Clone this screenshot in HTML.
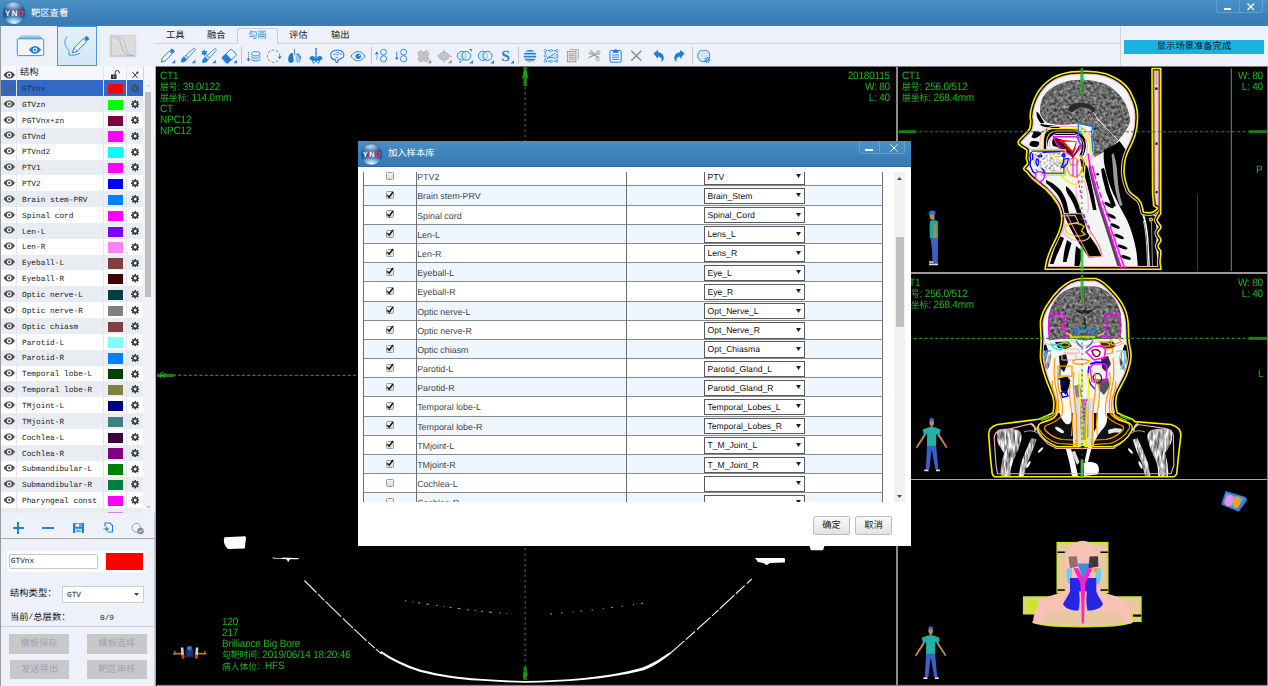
<!DOCTYPE html>
<html lang="zh"><head><meta charset="utf-8"><title>靶区查看</title>
<style>
*{box-sizing:border-box;margin:0;padding:0}
html,body{width:1268px;height:686px;overflow:hidden;background:#000;font-family:"Liberation Sans",sans-serif;text-rendering:geometricPrecision;}
body{position:relative}
.abs{position:absolute}
span.cj{display:inline-block;vertical-align:top;overflow:visible;font-family:"Liberation Sans","Noto Sans CJK SC",sans-serif;font-size:9.3px;line-height:9.3px;height:9.3px;white-space:nowrap;letter-spacing:0;font-weight:normal;text-align:left}
#title{position:absolute;left:0;top:0;width:1268px;height:26px;background:linear-gradient(#4a92c6,#3d80ba 60%,#3a7ab5)}
#band{position:absolute;left:0;top:26px;width:1268px;height:40px;background:#eef1f9}
#bandline{position:absolute;left:155px;top:66px;width:1113px;height:1px;background:#7a7a7a}
.logo{position:absolute;border-radius:50%;background:radial-gradient(ellipse 60% 35% at 50% 92%,#e8f6ff 0,rgba(140,200,235,.9) 45%,rgba(80,150,210,0) 100%),radial-gradient(ellipse 55% 30% at 45% 12%,rgba(255,255,255,.75) 0,rgba(255,255,255,0) 100%),radial-gradient(circle at 50% 45%,#2f6eb0 0,#1f5496 70%,#163f78 100%);box-shadow:0 0 1px #1a3f70}
.wbtn{position:absolute;top:0;height:13px;border:1px solid #62a0d2;border-top:0;background:linear-gradient(#4a92c6,#4087c0)}
#left{position:absolute;left:0;top:26px;width:155px;height:660px;background:#eef1f9}
.mono{font-family:"Liberation Mono",monospace}
.row{position:absolute;left:1px;width:142px;}
.gt{color:#20b420;font-size:10.6px;line-height:11.1px;height:11.1px;white-space:pre;position:absolute;letter-spacing:-0.2px;transform:scaleX(0.945);transform-origin:0 0}.gt.r{transform-origin:100% 0}
.view{position:absolute;background:#000;overflow:hidden}

</style></head>
<body>
<div id="title"></div>
<div class="logo" style="left:3.0px;top:2.0px;width:22.0px;height:22.0px"></div><div class="abs" style="left:3.0px;top:9.9px;width:22.0px;text-align:center;font:bold 7.9px 'Liberation Sans',sans-serif;color:#fff;letter-spacing:-0.2px;line-height:1">Y<span style="color:#e33">i</span>N<span style="color:#e33">O</span></div>
<div class="abs" style="left:31px;top:8.5px"><span class="cj" style="width:37.20px;color:#fff;">靶区查看</span></div>
<div class="wbtn" style="left:1216px;width:24px;border-radius:0 0 0 3px"></div><div class="wbtn" style="left:1239px;width:24px;border-radius:0 0 3px 0"></div>
<div class="abs" style="left:1224px;top:8px;width:7px;height:1.5px;background:#fff"></div>
<svg class="abs" style="left:1246px;top:2px" width="10" height="9" viewBox="0 0 10 9"><path d="M1.5 1.5L8 8M8 1.5L1.5 8" stroke="#fff" stroke-width="1.2" fill="none"/></svg>
<div id="band"></div><div id="bandline"></div>
<div class="abs" style="left:155px;top:43px;width:965px;height:1px;background:#d0d3dc"></div>
<div class="abs" style="left:237px;top:28px;width:41px;height:16px;border:1px solid #c8ccd6;border-bottom:0;border-radius:3px 3px 0 0;background:#eef1f9"></div>
<div class="abs" style="left:166.0px;top:30.5px"><span class="cj" style="width:18.60px;color:#222;">工具</span></div>
<div class="abs" style="left:207.0px;top:30.5px"><span class="cj" style="width:18.60px;color:#222;">融合</span></div>
<div class="abs" style="left:248.0px;top:30.5px"><span class="cj" style="width:18.60px;color:#2f8fdc;">勾画</span></div>
<div class="abs" style="left:289.0px;top:30.5px"><span class="cj" style="width:18.60px;color:#222;">评估</span></div>
<div class="abs" style="left:331.0px;top:30.5px"><span class="cj" style="width:18.60px;color:#222;">输出</span></div>
<div class="abs" style="left:1120px;top:26px;width:1px;height:40px;background:#cfd2da"></div>
<div class="abs" style="left:1124px;top:40px;width:140px;height:14px;background:#1ab3df;text-align:center;padding-top:2px"><span class="cj" style="width:74.40px;color:#111;">显示场景准备完成</span></div>
<div class="abs" style="left:240.5px;top:47px;width:1px;height:17px;background:#c2c6d0"></div>
<div class="abs" style="left:370.5px;top:47px;width:1px;height:17px;background:#c2c6d0"></div>
<div class="abs" style="left:518.0px;top:47px;width:1px;height:17px;background:#c2c6d0"></div>
<div class="abs" style="left:691.5px;top:47px;width:1px;height:17px;background:#c2c6d0"></div><div id="left"></div>
<div class="abs" style="left:0;top:26px;width:1px;height:660px;background:#9a9a9a"></div>
<div class="abs" style="left:154px;top:66px;width:1.800px;height:620px;background:linear-gradient(90deg,#dcdee4,#9a9a9a)"></div>
<div class="abs" style="left:57px;top:26px;width:39.5px;height:39.5px;border:1px solid #4a98d4;background:linear-gradient(#e6f0f8,#cfe8f4)"></div>
<div class="abs" style="left:1px;top:66px;width:153.5px;height:14.3px;background:#f6f7fb"></div>
<div class="abs" style="left:20px;top:68px"><span class="cj" style="width:18.60px;color:#222;">结构</span></div>
<svg class="abs" style="left:2.8px;top:70.5px" width="12.500" height="8" viewBox="0 0 22 14"><path d="M1 7C5 1.5 8.5 1 11 1s6 .5 10 6c-4 5.500-7.500 6-10 6S5 12.500 1 7z" fill="#444"/><circle cx="11" cy="7" r="4.300" fill="#f6f7fb"/><circle cx="11" cy="7" r="2" fill="#444"/></svg>
<div class="abs" style="left:1px;top:80.3px;width:153.500px;height:432.3px;background:#f0f2f8;overflow:hidden">
<div class="abs" style="left:0;top:0.00px;width:142px;height:15.95px;background:#316ac5"></div>
<svg class="abs" style="left:1.8px;top:3.6px" width="12.500" height="8" viewBox="0 0 22 14"><path d="M1 7C5 1.5 8.5 1 11 1s6 .5 10 6c-4 5.500-7.500 6-10 6S5 12.500 1 7z" fill="#4a5f8a"/><circle cx="11" cy="7" r="4.300" fill="#316ac5"/><circle cx="11" cy="7" r="2" fill="#4a5f8a"/></svg>
<div class="abs mono" style="left:21px;top:2.70px;font-size:7.8px;line-height:15.85px;color:#1c2c50;white-space:pre">GTVnx</div>
<div class="abs" style="left:107.200px;top:3.60px;width:15px;height:10.3px;background:#ff0000"></div>
<svg class="abs" style="left:129.7px;top:4.0px" width="8.400" height="8.400" viewBox="0 0 18 18"><g fill="#454b5c"><path d="M9 2.600a6.400 6.400 0 1 0 0 12.800a6.400 6.400 0 1 0 0-12.800zm0 3.400a3 3 0 1 1 0 6a3 3 0 1 1 0-6z" fill-rule="evenodd"/><rect x="7.300" y="0" width="3.400" height="4" transform="rotate(0 9 9)"/><rect x="7.300" y="0" width="3.400" height="4" transform="rotate(45 9 9)"/><rect x="7.300" y="0" width="3.400" height="4" transform="rotate(90 9 9)"/><rect x="7.300" y="0" width="3.400" height="4" transform="rotate(135 9 9)"/><rect x="7.300" y="0" width="3.400" height="4" transform="rotate(180 9 9)"/><rect x="7.300" y="0" width="3.400" height="4" transform="rotate(225 9 9)"/><rect x="7.300" y="0" width="3.400" height="4" transform="rotate(270 9 9)"/><rect x="7.300" y="0" width="3.400" height="4" transform="rotate(315 9 9)"/></g></svg>
<div class="abs" style="left:0;top:15.85px;width:142px;height:15.95px;background:#e9ecf3"></div>
<svg class="abs" style="left:1.8px;top:19.4px" width="12.500" height="8" viewBox="0 0 22 14"><path d="M1 7C5 1.5 8.5 1 11 1s6 .5 10 6c-4 5.500-7.500 6-10 6S5 12.500 1 7z" fill="#505050"/><circle cx="11" cy="7" r="4.300" fill="#e9ecf3"/><circle cx="11" cy="7" r="2" fill="#505050"/></svg>
<div class="abs mono" style="left:21px;top:18.55px;font-size:7.8px;line-height:15.85px;color:#222;white-space:pre">GTVzn</div>
<div class="abs" style="left:107.200px;top:19.45px;width:15px;height:10.3px;background:#00ff00"></div>
<svg class="abs" style="left:129.7px;top:19.9px" width="8.400" height="8.400" viewBox="0 0 18 18"><g fill="#3c3c3c"><path d="M9 2.600a6.400 6.400 0 1 0 0 12.800a6.400 6.400 0 1 0 0-12.800zm0 3.400a3 3 0 1 1 0 6a3 3 0 1 1 0-6z" fill-rule="evenodd"/><rect x="7.300" y="0" width="3.400" height="4" transform="rotate(0 9 9)"/><rect x="7.300" y="0" width="3.400" height="4" transform="rotate(45 9 9)"/><rect x="7.300" y="0" width="3.400" height="4" transform="rotate(90 9 9)"/><rect x="7.300" y="0" width="3.400" height="4" transform="rotate(135 9 9)"/><rect x="7.300" y="0" width="3.400" height="4" transform="rotate(180 9 9)"/><rect x="7.300" y="0" width="3.400" height="4" transform="rotate(225 9 9)"/><rect x="7.300" y="0" width="3.400" height="4" transform="rotate(270 9 9)"/><rect x="7.300" y="0" width="3.400" height="4" transform="rotate(315 9 9)"/></g></svg>
<div class="abs" style="left:0;top:31.70px;width:142px;height:15.95px;background:#ffffff"></div>
<svg class="abs" style="left:1.8px;top:35.3px" width="12.500" height="8" viewBox="0 0 22 14"><path d="M1 7C5 1.5 8.5 1 11 1s6 .5 10 6c-4 5.500-7.500 6-10 6S5 12.500 1 7z" fill="#505050"/><circle cx="11" cy="7" r="4.300" fill="#ffffff"/><circle cx="11" cy="7" r="2" fill="#505050"/></svg>
<div class="abs mono" style="left:21px;top:34.40px;font-size:7.8px;line-height:15.85px;color:#222;white-space:pre">PGTVnx+zn</div>
<div class="abs" style="left:107.200px;top:35.30px;width:15px;height:10.3px;background:#800040"></div>
<svg class="abs" style="left:129.7px;top:35.7px" width="8.400" height="8.400" viewBox="0 0 18 18"><g fill="#3c3c3c"><path d="M9 2.600a6.400 6.400 0 1 0 0 12.800a6.400 6.400 0 1 0 0-12.800zm0 3.400a3 3 0 1 1 0 6a3 3 0 1 1 0-6z" fill-rule="evenodd"/><rect x="7.300" y="0" width="3.400" height="4" transform="rotate(0 9 9)"/><rect x="7.300" y="0" width="3.400" height="4" transform="rotate(45 9 9)"/><rect x="7.300" y="0" width="3.400" height="4" transform="rotate(90 9 9)"/><rect x="7.300" y="0" width="3.400" height="4" transform="rotate(135 9 9)"/><rect x="7.300" y="0" width="3.400" height="4" transform="rotate(180 9 9)"/><rect x="7.300" y="0" width="3.400" height="4" transform="rotate(225 9 9)"/><rect x="7.300" y="0" width="3.400" height="4" transform="rotate(270 9 9)"/><rect x="7.300" y="0" width="3.400" height="4" transform="rotate(315 9 9)"/></g></svg>
<div class="abs" style="left:0;top:47.55px;width:142px;height:15.95px;background:#e9ecf3"></div>
<svg class="abs" style="left:1.8px;top:51.1px" width="12.500" height="8" viewBox="0 0 22 14"><path d="M1 7C5 1.5 8.5 1 11 1s6 .5 10 6c-4 5.500-7.500 6-10 6S5 12.500 1 7z" fill="#505050"/><circle cx="11" cy="7" r="4.300" fill="#e9ecf3"/><circle cx="11" cy="7" r="2" fill="#505050"/></svg>
<div class="abs mono" style="left:21px;top:50.25px;font-size:7.8px;line-height:15.85px;color:#222;white-space:pre">GTVnd</div>
<div class="abs" style="left:107.200px;top:51.15px;width:15px;height:10.3px;background:#ff00ff"></div>
<svg class="abs" style="left:129.7px;top:51.5px" width="8.400" height="8.400" viewBox="0 0 18 18"><g fill="#3c3c3c"><path d="M9 2.600a6.400 6.400 0 1 0 0 12.800a6.400 6.400 0 1 0 0-12.800zm0 3.400a3 3 0 1 1 0 6a3 3 0 1 1 0-6z" fill-rule="evenodd"/><rect x="7.300" y="0" width="3.400" height="4" transform="rotate(0 9 9)"/><rect x="7.300" y="0" width="3.400" height="4" transform="rotate(45 9 9)"/><rect x="7.300" y="0" width="3.400" height="4" transform="rotate(90 9 9)"/><rect x="7.300" y="0" width="3.400" height="4" transform="rotate(135 9 9)"/><rect x="7.300" y="0" width="3.400" height="4" transform="rotate(180 9 9)"/><rect x="7.300" y="0" width="3.400" height="4" transform="rotate(225 9 9)"/><rect x="7.300" y="0" width="3.400" height="4" transform="rotate(270 9 9)"/><rect x="7.300" y="0" width="3.400" height="4" transform="rotate(315 9 9)"/></g></svg>
<div class="abs" style="left:0;top:63.40px;width:142px;height:15.95px;background:#ffffff"></div>
<svg class="abs" style="left:1.8px;top:67.0px" width="12.500" height="8" viewBox="0 0 22 14"><path d="M1 7C5 1.5 8.5 1 11 1s6 .5 10 6c-4 5.500-7.500 6-10 6S5 12.500 1 7z" fill="#505050"/><circle cx="11" cy="7" r="4.300" fill="#ffffff"/><circle cx="11" cy="7" r="2" fill="#505050"/></svg>
<div class="abs mono" style="left:21px;top:66.10px;font-size:7.8px;line-height:15.85px;color:#222;white-space:pre">PTVnd2</div>
<div class="abs" style="left:107.200px;top:67.00px;width:15px;height:10.3px;background:#00ffff"></div>
<svg class="abs" style="left:129.7px;top:67.4px" width="8.400" height="8.400" viewBox="0 0 18 18"><g fill="#3c3c3c"><path d="M9 2.600a6.400 6.400 0 1 0 0 12.800a6.400 6.400 0 1 0 0-12.800zm0 3.400a3 3 0 1 1 0 6a3 3 0 1 1 0-6z" fill-rule="evenodd"/><rect x="7.300" y="0" width="3.400" height="4" transform="rotate(0 9 9)"/><rect x="7.300" y="0" width="3.400" height="4" transform="rotate(45 9 9)"/><rect x="7.300" y="0" width="3.400" height="4" transform="rotate(90 9 9)"/><rect x="7.300" y="0" width="3.400" height="4" transform="rotate(135 9 9)"/><rect x="7.300" y="0" width="3.400" height="4" transform="rotate(180 9 9)"/><rect x="7.300" y="0" width="3.400" height="4" transform="rotate(225 9 9)"/><rect x="7.300" y="0" width="3.400" height="4" transform="rotate(270 9 9)"/><rect x="7.300" y="0" width="3.400" height="4" transform="rotate(315 9 9)"/></g></svg>
<div class="abs" style="left:0;top:79.25px;width:142px;height:15.95px;background:#e9ecf3"></div>
<svg class="abs" style="left:1.8px;top:82.8px" width="12.500" height="8" viewBox="0 0 22 14"><path d="M1 7C5 1.5 8.5 1 11 1s6 .5 10 6c-4 5.500-7.500 6-10 6S5 12.500 1 7z" fill="#505050"/><circle cx="11" cy="7" r="4.300" fill="#e9ecf3"/><circle cx="11" cy="7" r="2" fill="#505050"/></svg>
<div class="abs mono" style="left:21px;top:81.95px;font-size:7.8px;line-height:15.85px;color:#222;white-space:pre">PTV1</div>
<div class="abs" style="left:107.200px;top:82.85px;width:15px;height:10.3px;background:#ff00ff"></div>
<svg class="abs" style="left:129.7px;top:83.2px" width="8.400" height="8.400" viewBox="0 0 18 18"><g fill="#3c3c3c"><path d="M9 2.600a6.400 6.400 0 1 0 0 12.800a6.400 6.400 0 1 0 0-12.800zm0 3.400a3 3 0 1 1 0 6a3 3 0 1 1 0-6z" fill-rule="evenodd"/><rect x="7.300" y="0" width="3.400" height="4" transform="rotate(0 9 9)"/><rect x="7.300" y="0" width="3.400" height="4" transform="rotate(45 9 9)"/><rect x="7.300" y="0" width="3.400" height="4" transform="rotate(90 9 9)"/><rect x="7.300" y="0" width="3.400" height="4" transform="rotate(135 9 9)"/><rect x="7.300" y="0" width="3.400" height="4" transform="rotate(180 9 9)"/><rect x="7.300" y="0" width="3.400" height="4" transform="rotate(225 9 9)"/><rect x="7.300" y="0" width="3.400" height="4" transform="rotate(270 9 9)"/><rect x="7.300" y="0" width="3.400" height="4" transform="rotate(315 9 9)"/></g></svg>
<div class="abs" style="left:0;top:95.10px;width:142px;height:15.95px;background:#ffffff"></div>
<svg class="abs" style="left:1.8px;top:98.7px" width="12.500" height="8" viewBox="0 0 22 14"><path d="M1 7C5 1.5 8.5 1 11 1s6 .5 10 6c-4 5.500-7.500 6-10 6S5 12.500 1 7z" fill="#505050"/><circle cx="11" cy="7" r="4.300" fill="#ffffff"/><circle cx="11" cy="7" r="2" fill="#505050"/></svg>
<div class="abs mono" style="left:21px;top:97.80px;font-size:7.8px;line-height:15.85px;color:#222;white-space:pre">PTV2</div>
<div class="abs" style="left:107.200px;top:98.70px;width:15px;height:10.3px;background:#0000ff"></div>
<svg class="abs" style="left:129.7px;top:99.1px" width="8.400" height="8.400" viewBox="0 0 18 18"><g fill="#3c3c3c"><path d="M9 2.600a6.400 6.400 0 1 0 0 12.800a6.400 6.400 0 1 0 0-12.800zm0 3.400a3 3 0 1 1 0 6a3 3 0 1 1 0-6z" fill-rule="evenodd"/><rect x="7.300" y="0" width="3.400" height="4" transform="rotate(0 9 9)"/><rect x="7.300" y="0" width="3.400" height="4" transform="rotate(45 9 9)"/><rect x="7.300" y="0" width="3.400" height="4" transform="rotate(90 9 9)"/><rect x="7.300" y="0" width="3.400" height="4" transform="rotate(135 9 9)"/><rect x="7.300" y="0" width="3.400" height="4" transform="rotate(180 9 9)"/><rect x="7.300" y="0" width="3.400" height="4" transform="rotate(225 9 9)"/><rect x="7.300" y="0" width="3.400" height="4" transform="rotate(270 9 9)"/><rect x="7.300" y="0" width="3.400" height="4" transform="rotate(315 9 9)"/></g></svg>
<div class="abs" style="left:0;top:110.95px;width:142px;height:15.95px;background:#e9ecf3"></div>
<svg class="abs" style="left:1.8px;top:114.5px" width="12.500" height="8" viewBox="0 0 22 14"><path d="M1 7C5 1.5 8.5 1 11 1s6 .5 10 6c-4 5.500-7.500 6-10 6S5 12.500 1 7z" fill="#505050"/><circle cx="11" cy="7" r="4.300" fill="#e9ecf3"/><circle cx="11" cy="7" r="2" fill="#505050"/></svg>
<div class="abs mono" style="left:21px;top:113.65px;font-size:7.8px;line-height:15.85px;color:#222;white-space:pre">Brain stem-PRV</div>
<div class="abs" style="left:107.200px;top:114.55px;width:15px;height:10.3px;background:#0080ff"></div>
<svg class="abs" style="left:129.7px;top:115.0px" width="8.400" height="8.400" viewBox="0 0 18 18"><g fill="#3c3c3c"><path d="M9 2.600a6.400 6.400 0 1 0 0 12.800a6.400 6.400 0 1 0 0-12.800zm0 3.400a3 3 0 1 1 0 6a3 3 0 1 1 0-6z" fill-rule="evenodd"/><rect x="7.300" y="0" width="3.400" height="4" transform="rotate(0 9 9)"/><rect x="7.300" y="0" width="3.400" height="4" transform="rotate(45 9 9)"/><rect x="7.300" y="0" width="3.400" height="4" transform="rotate(90 9 9)"/><rect x="7.300" y="0" width="3.400" height="4" transform="rotate(135 9 9)"/><rect x="7.300" y="0" width="3.400" height="4" transform="rotate(180 9 9)"/><rect x="7.300" y="0" width="3.400" height="4" transform="rotate(225 9 9)"/><rect x="7.300" y="0" width="3.400" height="4" transform="rotate(270 9 9)"/><rect x="7.300" y="0" width="3.400" height="4" transform="rotate(315 9 9)"/></g></svg>
<div class="abs" style="left:0;top:126.80px;width:142px;height:15.95px;background:#ffffff"></div>
<svg class="abs" style="left:1.8px;top:130.4px" width="12.500" height="8" viewBox="0 0 22 14"><path d="M1 7C5 1.5 8.5 1 11 1s6 .5 10 6c-4 5.500-7.500 6-10 6S5 12.500 1 7z" fill="#505050"/><circle cx="11" cy="7" r="4.300" fill="#ffffff"/><circle cx="11" cy="7" r="2" fill="#505050"/></svg>
<div class="abs mono" style="left:21px;top:129.50px;font-size:7.8px;line-height:15.85px;color:#222;white-space:pre">Spinal cord</div>
<div class="abs" style="left:107.200px;top:130.40px;width:15px;height:10.3px;background:#ff00ff"></div>
<svg class="abs" style="left:129.7px;top:130.8px" width="8.400" height="8.400" viewBox="0 0 18 18"><g fill="#3c3c3c"><path d="M9 2.600a6.400 6.400 0 1 0 0 12.800a6.400 6.400 0 1 0 0-12.800zm0 3.400a3 3 0 1 1 0 6a3 3 0 1 1 0-6z" fill-rule="evenodd"/><rect x="7.300" y="0" width="3.400" height="4" transform="rotate(0 9 9)"/><rect x="7.300" y="0" width="3.400" height="4" transform="rotate(45 9 9)"/><rect x="7.300" y="0" width="3.400" height="4" transform="rotate(90 9 9)"/><rect x="7.300" y="0" width="3.400" height="4" transform="rotate(135 9 9)"/><rect x="7.300" y="0" width="3.400" height="4" transform="rotate(180 9 9)"/><rect x="7.300" y="0" width="3.400" height="4" transform="rotate(225 9 9)"/><rect x="7.300" y="0" width="3.400" height="4" transform="rotate(270 9 9)"/><rect x="7.300" y="0" width="3.400" height="4" transform="rotate(315 9 9)"/></g></svg>
<div class="abs" style="left:0;top:142.65px;width:142px;height:15.95px;background:#e9ecf3"></div>
<svg class="abs" style="left:1.8px;top:146.2px" width="12.500" height="8" viewBox="0 0 22 14"><path d="M1 7C5 1.5 8.5 1 11 1s6 .5 10 6c-4 5.500-7.500 6-10 6S5 12.500 1 7z" fill="#505050"/><circle cx="11" cy="7" r="4.300" fill="#e9ecf3"/><circle cx="11" cy="7" r="2" fill="#505050"/></svg>
<div class="abs mono" style="left:21px;top:145.35px;font-size:7.8px;line-height:15.85px;color:#222;white-space:pre">Len-L</div>
<div class="abs" style="left:107.200px;top:146.25px;width:15px;height:10.3px;background:#8000ff"></div>
<svg class="abs" style="left:129.7px;top:146.7px" width="8.400" height="8.400" viewBox="0 0 18 18"><g fill="#3c3c3c"><path d="M9 2.600a6.400 6.400 0 1 0 0 12.800a6.400 6.400 0 1 0 0-12.800zm0 3.400a3 3 0 1 1 0 6a3 3 0 1 1 0-6z" fill-rule="evenodd"/><rect x="7.300" y="0" width="3.400" height="4" transform="rotate(0 9 9)"/><rect x="7.300" y="0" width="3.400" height="4" transform="rotate(45 9 9)"/><rect x="7.300" y="0" width="3.400" height="4" transform="rotate(90 9 9)"/><rect x="7.300" y="0" width="3.400" height="4" transform="rotate(135 9 9)"/><rect x="7.300" y="0" width="3.400" height="4" transform="rotate(180 9 9)"/><rect x="7.300" y="0" width="3.400" height="4" transform="rotate(225 9 9)"/><rect x="7.300" y="0" width="3.400" height="4" transform="rotate(270 9 9)"/><rect x="7.300" y="0" width="3.400" height="4" transform="rotate(315 9 9)"/></g></svg>
<div class="abs" style="left:0;top:158.50px;width:142px;height:15.95px;background:#ffffff"></div>
<svg class="abs" style="left:1.8px;top:162.1px" width="12.500" height="8" viewBox="0 0 22 14"><path d="M1 7C5 1.5 8.5 1 11 1s6 .5 10 6c-4 5.500-7.500 6-10 6S5 12.500 1 7z" fill="#505050"/><circle cx="11" cy="7" r="4.300" fill="#ffffff"/><circle cx="11" cy="7" r="2" fill="#505050"/></svg>
<div class="abs mono" style="left:21px;top:161.20px;font-size:7.8px;line-height:15.85px;color:#222;white-space:pre">Len-R</div>
<div class="abs" style="left:107.200px;top:162.10px;width:15px;height:10.3px;background:#ff80ff"></div>
<svg class="abs" style="left:129.7px;top:162.5px" width="8.400" height="8.400" viewBox="0 0 18 18"><g fill="#3c3c3c"><path d="M9 2.600a6.400 6.400 0 1 0 0 12.800a6.400 6.400 0 1 0 0-12.800zm0 3.400a3 3 0 1 1 0 6a3 3 0 1 1 0-6z" fill-rule="evenodd"/><rect x="7.300" y="0" width="3.400" height="4" transform="rotate(0 9 9)"/><rect x="7.300" y="0" width="3.400" height="4" transform="rotate(45 9 9)"/><rect x="7.300" y="0" width="3.400" height="4" transform="rotate(90 9 9)"/><rect x="7.300" y="0" width="3.400" height="4" transform="rotate(135 9 9)"/><rect x="7.300" y="0" width="3.400" height="4" transform="rotate(180 9 9)"/><rect x="7.300" y="0" width="3.400" height="4" transform="rotate(225 9 9)"/><rect x="7.300" y="0" width="3.400" height="4" transform="rotate(270 9 9)"/><rect x="7.300" y="0" width="3.400" height="4" transform="rotate(315 9 9)"/></g></svg>
<div class="abs" style="left:0;top:174.35px;width:142px;height:15.95px;background:#e9ecf3"></div>
<svg class="abs" style="left:1.8px;top:177.9px" width="12.500" height="8" viewBox="0 0 22 14"><path d="M1 7C5 1.5 8.5 1 11 1s6 .5 10 6c-4 5.500-7.500 6-10 6S5 12.500 1 7z" fill="#505050"/><circle cx="11" cy="7" r="4.300" fill="#e9ecf3"/><circle cx="11" cy="7" r="2" fill="#505050"/></svg>
<div class="abs mono" style="left:21px;top:177.05px;font-size:7.8px;line-height:15.85px;color:#222;white-space:pre">Eyeball-L</div>
<div class="abs" style="left:107.200px;top:177.95px;width:15px;height:10.3px;background:#804040"></div>
<svg class="abs" style="left:129.7px;top:178.3px" width="8.400" height="8.400" viewBox="0 0 18 18"><g fill="#3c3c3c"><path d="M9 2.600a6.400 6.400 0 1 0 0 12.800a6.400 6.400 0 1 0 0-12.800zm0 3.400a3 3 0 1 1 0 6a3 3 0 1 1 0-6z" fill-rule="evenodd"/><rect x="7.300" y="0" width="3.400" height="4" transform="rotate(0 9 9)"/><rect x="7.300" y="0" width="3.400" height="4" transform="rotate(45 9 9)"/><rect x="7.300" y="0" width="3.400" height="4" transform="rotate(90 9 9)"/><rect x="7.300" y="0" width="3.400" height="4" transform="rotate(135 9 9)"/><rect x="7.300" y="0" width="3.400" height="4" transform="rotate(180 9 9)"/><rect x="7.300" y="0" width="3.400" height="4" transform="rotate(225 9 9)"/><rect x="7.300" y="0" width="3.400" height="4" transform="rotate(270 9 9)"/><rect x="7.300" y="0" width="3.400" height="4" transform="rotate(315 9 9)"/></g></svg>
<div class="abs" style="left:0;top:190.20px;width:142px;height:15.95px;background:#ffffff"></div>
<svg class="abs" style="left:1.8px;top:193.8px" width="12.500" height="8" viewBox="0 0 22 14"><path d="M1 7C5 1.5 8.5 1 11 1s6 .5 10 6c-4 5.500-7.500 6-10 6S5 12.500 1 7z" fill="#505050"/><circle cx="11" cy="7" r="4.300" fill="#ffffff"/><circle cx="11" cy="7" r="2" fill="#505050"/></svg>
<div class="abs mono" style="left:21px;top:192.90px;font-size:7.8px;line-height:15.85px;color:#222;white-space:pre">Eyeball-R</div>
<div class="abs" style="left:107.200px;top:193.80px;width:15px;height:10.3px;background:#400000"></div>
<svg class="abs" style="left:129.7px;top:194.2px" width="8.400" height="8.400" viewBox="0 0 18 18"><g fill="#3c3c3c"><path d="M9 2.600a6.400 6.400 0 1 0 0 12.800a6.400 6.400 0 1 0 0-12.800zm0 3.400a3 3 0 1 1 0 6a3 3 0 1 1 0-6z" fill-rule="evenodd"/><rect x="7.300" y="0" width="3.400" height="4" transform="rotate(0 9 9)"/><rect x="7.300" y="0" width="3.400" height="4" transform="rotate(45 9 9)"/><rect x="7.300" y="0" width="3.400" height="4" transform="rotate(90 9 9)"/><rect x="7.300" y="0" width="3.400" height="4" transform="rotate(135 9 9)"/><rect x="7.300" y="0" width="3.400" height="4" transform="rotate(180 9 9)"/><rect x="7.300" y="0" width="3.400" height="4" transform="rotate(225 9 9)"/><rect x="7.300" y="0" width="3.400" height="4" transform="rotate(270 9 9)"/><rect x="7.300" y="0" width="3.400" height="4" transform="rotate(315 9 9)"/></g></svg>
<div class="abs" style="left:0;top:206.05px;width:142px;height:15.95px;background:#e9ecf3"></div>
<svg class="abs" style="left:1.8px;top:209.6px" width="12.500" height="8" viewBox="0 0 22 14"><path d="M1 7C5 1.5 8.5 1 11 1s6 .5 10 6c-4 5.500-7.500 6-10 6S5 12.500 1 7z" fill="#505050"/><circle cx="11" cy="7" r="4.300" fill="#e9ecf3"/><circle cx="11" cy="7" r="2" fill="#505050"/></svg>
<div class="abs mono" style="left:21px;top:208.75px;font-size:7.8px;line-height:15.85px;color:#222;white-space:pre">Optic nerve-L</div>
<div class="abs" style="left:107.200px;top:209.65px;width:15px;height:10.3px;background:#004040"></div>
<svg class="abs" style="left:129.7px;top:210.0px" width="8.400" height="8.400" viewBox="0 0 18 18"><g fill="#3c3c3c"><path d="M9 2.600a6.400 6.400 0 1 0 0 12.800a6.400 6.400 0 1 0 0-12.800zm0 3.400a3 3 0 1 1 0 6a3 3 0 1 1 0-6z" fill-rule="evenodd"/><rect x="7.300" y="0" width="3.400" height="4" transform="rotate(0 9 9)"/><rect x="7.300" y="0" width="3.400" height="4" transform="rotate(45 9 9)"/><rect x="7.300" y="0" width="3.400" height="4" transform="rotate(90 9 9)"/><rect x="7.300" y="0" width="3.400" height="4" transform="rotate(135 9 9)"/><rect x="7.300" y="0" width="3.400" height="4" transform="rotate(180 9 9)"/><rect x="7.300" y="0" width="3.400" height="4" transform="rotate(225 9 9)"/><rect x="7.300" y="0" width="3.400" height="4" transform="rotate(270 9 9)"/><rect x="7.300" y="0" width="3.400" height="4" transform="rotate(315 9 9)"/></g></svg>
<div class="abs" style="left:0;top:221.90px;width:142px;height:15.95px;background:#ffffff"></div>
<svg class="abs" style="left:1.8px;top:225.5px" width="12.500" height="8" viewBox="0 0 22 14"><path d="M1 7C5 1.5 8.5 1 11 1s6 .5 10 6c-4 5.500-7.500 6-10 6S5 12.500 1 7z" fill="#505050"/><circle cx="11" cy="7" r="4.300" fill="#ffffff"/><circle cx="11" cy="7" r="2" fill="#505050"/></svg>
<div class="abs mono" style="left:21px;top:224.60px;font-size:7.8px;line-height:15.85px;color:#222;white-space:pre">Optic nerve-R</div>
<div class="abs" style="left:107.200px;top:225.50px;width:15px;height:10.3px;background:#808080"></div>
<svg class="abs" style="left:129.7px;top:225.9px" width="8.400" height="8.400" viewBox="0 0 18 18"><g fill="#3c3c3c"><path d="M9 2.600a6.400 6.400 0 1 0 0 12.800a6.400 6.400 0 1 0 0-12.800zm0 3.400a3 3 0 1 1 0 6a3 3 0 1 1 0-6z" fill-rule="evenodd"/><rect x="7.300" y="0" width="3.400" height="4" transform="rotate(0 9 9)"/><rect x="7.300" y="0" width="3.400" height="4" transform="rotate(45 9 9)"/><rect x="7.300" y="0" width="3.400" height="4" transform="rotate(90 9 9)"/><rect x="7.300" y="0" width="3.400" height="4" transform="rotate(135 9 9)"/><rect x="7.300" y="0" width="3.400" height="4" transform="rotate(180 9 9)"/><rect x="7.300" y="0" width="3.400" height="4" transform="rotate(225 9 9)"/><rect x="7.300" y="0" width="3.400" height="4" transform="rotate(270 9 9)"/><rect x="7.300" y="0" width="3.400" height="4" transform="rotate(315 9 9)"/></g></svg>
<div class="abs" style="left:0;top:237.75px;width:142px;height:15.95px;background:#e9ecf3"></div>
<svg class="abs" style="left:1.8px;top:241.3px" width="12.500" height="8" viewBox="0 0 22 14"><path d="M1 7C5 1.5 8.5 1 11 1s6 .5 10 6c-4 5.500-7.500 6-10 6S5 12.500 1 7z" fill="#505050"/><circle cx="11" cy="7" r="4.300" fill="#e9ecf3"/><circle cx="11" cy="7" r="2" fill="#505050"/></svg>
<div class="abs mono" style="left:21px;top:240.45px;font-size:7.8px;line-height:15.85px;color:#222;white-space:pre">Optic chiasm</div>
<div class="abs" style="left:107.200px;top:241.35px;width:15px;height:10.3px;background:#804040"></div>
<svg class="abs" style="left:129.7px;top:241.8px" width="8.400" height="8.400" viewBox="0 0 18 18"><g fill="#3c3c3c"><path d="M9 2.600a6.400 6.400 0 1 0 0 12.800a6.400 6.400 0 1 0 0-12.800zm0 3.400a3 3 0 1 1 0 6a3 3 0 1 1 0-6z" fill-rule="evenodd"/><rect x="7.300" y="0" width="3.400" height="4" transform="rotate(0 9 9)"/><rect x="7.300" y="0" width="3.400" height="4" transform="rotate(45 9 9)"/><rect x="7.300" y="0" width="3.400" height="4" transform="rotate(90 9 9)"/><rect x="7.300" y="0" width="3.400" height="4" transform="rotate(135 9 9)"/><rect x="7.300" y="0" width="3.400" height="4" transform="rotate(180 9 9)"/><rect x="7.300" y="0" width="3.400" height="4" transform="rotate(225 9 9)"/><rect x="7.300" y="0" width="3.400" height="4" transform="rotate(270 9 9)"/><rect x="7.300" y="0" width="3.400" height="4" transform="rotate(315 9 9)"/></g></svg>
<div class="abs" style="left:0;top:253.60px;width:142px;height:15.95px;background:#ffffff"></div>
<svg class="abs" style="left:1.8px;top:257.2px" width="12.500" height="8" viewBox="0 0 22 14"><path d="M1 7C5 1.5 8.5 1 11 1s6 .5 10 6c-4 5.500-7.500 6-10 6S5 12.500 1 7z" fill="#505050"/><circle cx="11" cy="7" r="4.300" fill="#ffffff"/><circle cx="11" cy="7" r="2" fill="#505050"/></svg>
<div class="abs mono" style="left:21px;top:256.30px;font-size:7.8px;line-height:15.85px;color:#222;white-space:pre">Parotid-L</div>
<div class="abs" style="left:107.200px;top:257.20px;width:15px;height:10.3px;background:#80ffff"></div>
<svg class="abs" style="left:129.7px;top:257.6px" width="8.400" height="8.400" viewBox="0 0 18 18"><g fill="#3c3c3c"><path d="M9 2.600a6.400 6.400 0 1 0 0 12.800a6.400 6.400 0 1 0 0-12.800zm0 3.400a3 3 0 1 1 0 6a3 3 0 1 1 0-6z" fill-rule="evenodd"/><rect x="7.300" y="0" width="3.400" height="4" transform="rotate(0 9 9)"/><rect x="7.300" y="0" width="3.400" height="4" transform="rotate(45 9 9)"/><rect x="7.300" y="0" width="3.400" height="4" transform="rotate(90 9 9)"/><rect x="7.300" y="0" width="3.400" height="4" transform="rotate(135 9 9)"/><rect x="7.300" y="0" width="3.400" height="4" transform="rotate(180 9 9)"/><rect x="7.300" y="0" width="3.400" height="4" transform="rotate(225 9 9)"/><rect x="7.300" y="0" width="3.400" height="4" transform="rotate(270 9 9)"/><rect x="7.300" y="0" width="3.400" height="4" transform="rotate(315 9 9)"/></g></svg>
<div class="abs" style="left:0;top:269.45px;width:142px;height:15.95px;background:#e9ecf3"></div>
<svg class="abs" style="left:1.8px;top:273.1px" width="12.500" height="8" viewBox="0 0 22 14"><path d="M1 7C5 1.5 8.5 1 11 1s6 .5 10 6c-4 5.500-7.500 6-10 6S5 12.500 1 7z" fill="#505050"/><circle cx="11" cy="7" r="4.300" fill="#e9ecf3"/><circle cx="11" cy="7" r="2" fill="#505050"/></svg>
<div class="abs mono" style="left:21px;top:272.15px;font-size:7.8px;line-height:15.85px;color:#222;white-space:pre">Parotid-R</div>
<div class="abs" style="left:107.200px;top:273.05px;width:15px;height:10.3px;background:#0080ff"></div>
<svg class="abs" style="left:129.7px;top:273.4px" width="8.400" height="8.400" viewBox="0 0 18 18"><g fill="#3c3c3c"><path d="M9 2.600a6.400 6.400 0 1 0 0 12.800a6.400 6.400 0 1 0 0-12.800zm0 3.400a3 3 0 1 1 0 6a3 3 0 1 1 0-6z" fill-rule="evenodd"/><rect x="7.300" y="0" width="3.400" height="4" transform="rotate(0 9 9)"/><rect x="7.300" y="0" width="3.400" height="4" transform="rotate(45 9 9)"/><rect x="7.300" y="0" width="3.400" height="4" transform="rotate(90 9 9)"/><rect x="7.300" y="0" width="3.400" height="4" transform="rotate(135 9 9)"/><rect x="7.300" y="0" width="3.400" height="4" transform="rotate(180 9 9)"/><rect x="7.300" y="0" width="3.400" height="4" transform="rotate(225 9 9)"/><rect x="7.300" y="0" width="3.400" height="4" transform="rotate(270 9 9)"/><rect x="7.300" y="0" width="3.400" height="4" transform="rotate(315 9 9)"/></g></svg>
<div class="abs" style="left:0;top:285.30px;width:142px;height:15.95px;background:#ffffff"></div>
<svg class="abs" style="left:1.8px;top:288.9px" width="12.500" height="8" viewBox="0 0 22 14"><path d="M1 7C5 1.5 8.5 1 11 1s6 .5 10 6c-4 5.500-7.500 6-10 6S5 12.500 1 7z" fill="#505050"/><circle cx="11" cy="7" r="4.300" fill="#ffffff"/><circle cx="11" cy="7" r="2" fill="#505050"/></svg>
<div class="abs mono" style="left:21px;top:288.00px;font-size:7.8px;line-height:15.85px;color:#222;white-space:pre">Temporal lobe-L</div>
<div class="abs" style="left:107.200px;top:288.90px;width:15px;height:10.3px;background:#004000"></div>
<svg class="abs" style="left:129.7px;top:289.3px" width="8.400" height="8.400" viewBox="0 0 18 18"><g fill="#3c3c3c"><path d="M9 2.600a6.400 6.400 0 1 0 0 12.800a6.400 6.400 0 1 0 0-12.800zm0 3.400a3 3 0 1 1 0 6a3 3 0 1 1 0-6z" fill-rule="evenodd"/><rect x="7.300" y="0" width="3.400" height="4" transform="rotate(0 9 9)"/><rect x="7.300" y="0" width="3.400" height="4" transform="rotate(45 9 9)"/><rect x="7.300" y="0" width="3.400" height="4" transform="rotate(90 9 9)"/><rect x="7.300" y="0" width="3.400" height="4" transform="rotate(135 9 9)"/><rect x="7.300" y="0" width="3.400" height="4" transform="rotate(180 9 9)"/><rect x="7.300" y="0" width="3.400" height="4" transform="rotate(225 9 9)"/><rect x="7.300" y="0" width="3.400" height="4" transform="rotate(270 9 9)"/><rect x="7.300" y="0" width="3.400" height="4" transform="rotate(315 9 9)"/></g></svg>
<div class="abs" style="left:0;top:301.15px;width:142px;height:15.95px;background:#e9ecf3"></div>
<svg class="abs" style="left:1.8px;top:304.8px" width="12.500" height="8" viewBox="0 0 22 14"><path d="M1 7C5 1.5 8.5 1 11 1s6 .5 10 6c-4 5.500-7.500 6-10 6S5 12.500 1 7z" fill="#505050"/><circle cx="11" cy="7" r="4.300" fill="#e9ecf3"/><circle cx="11" cy="7" r="2" fill="#505050"/></svg>
<div class="abs mono" style="left:21px;top:303.85px;font-size:7.8px;line-height:15.85px;color:#222;white-space:pre">Temporal lobe-R</div>
<div class="abs" style="left:107.200px;top:304.75px;width:15px;height:10.3px;background:#808040"></div>
<svg class="abs" style="left:129.7px;top:305.1px" width="8.400" height="8.400" viewBox="0 0 18 18"><g fill="#3c3c3c"><path d="M9 2.600a6.400 6.400 0 1 0 0 12.800a6.400 6.400 0 1 0 0-12.800zm0 3.400a3 3 0 1 1 0 6a3 3 0 1 1 0-6z" fill-rule="evenodd"/><rect x="7.300" y="0" width="3.400" height="4" transform="rotate(0 9 9)"/><rect x="7.300" y="0" width="3.400" height="4" transform="rotate(45 9 9)"/><rect x="7.300" y="0" width="3.400" height="4" transform="rotate(90 9 9)"/><rect x="7.300" y="0" width="3.400" height="4" transform="rotate(135 9 9)"/><rect x="7.300" y="0" width="3.400" height="4" transform="rotate(180 9 9)"/><rect x="7.300" y="0" width="3.400" height="4" transform="rotate(225 9 9)"/><rect x="7.300" y="0" width="3.400" height="4" transform="rotate(270 9 9)"/><rect x="7.300" y="0" width="3.400" height="4" transform="rotate(315 9 9)"/></g></svg>
<div class="abs" style="left:0;top:317.00px;width:142px;height:15.95px;background:#ffffff"></div>
<svg class="abs" style="left:1.8px;top:320.6px" width="12.500" height="8" viewBox="0 0 22 14"><path d="M1 7C5 1.5 8.5 1 11 1s6 .5 10 6c-4 5.500-7.500 6-10 6S5 12.500 1 7z" fill="#505050"/><circle cx="11" cy="7" r="4.300" fill="#ffffff"/><circle cx="11" cy="7" r="2" fill="#505050"/></svg>
<div class="abs mono" style="left:21px;top:319.70px;font-size:7.8px;line-height:15.85px;color:#222;white-space:pre">TMjoint-L</div>
<div class="abs" style="left:107.200px;top:320.60px;width:15px;height:10.3px;background:#000080"></div>
<svg class="abs" style="left:129.7px;top:321.0px" width="8.400" height="8.400" viewBox="0 0 18 18"><g fill="#3c3c3c"><path d="M9 2.600a6.400 6.400 0 1 0 0 12.800a6.400 6.400 0 1 0 0-12.800zm0 3.400a3 3 0 1 1 0 6a3 3 0 1 1 0-6z" fill-rule="evenodd"/><rect x="7.300" y="0" width="3.400" height="4" transform="rotate(0 9 9)"/><rect x="7.300" y="0" width="3.400" height="4" transform="rotate(45 9 9)"/><rect x="7.300" y="0" width="3.400" height="4" transform="rotate(90 9 9)"/><rect x="7.300" y="0" width="3.400" height="4" transform="rotate(135 9 9)"/><rect x="7.300" y="0" width="3.400" height="4" transform="rotate(180 9 9)"/><rect x="7.300" y="0" width="3.400" height="4" transform="rotate(225 9 9)"/><rect x="7.300" y="0" width="3.400" height="4" transform="rotate(270 9 9)"/><rect x="7.300" y="0" width="3.400" height="4" transform="rotate(315 9 9)"/></g></svg>
<div class="abs" style="left:0;top:332.85px;width:142px;height:15.95px;background:#e9ecf3"></div>
<svg class="abs" style="left:1.8px;top:336.4px" width="12.500" height="8" viewBox="0 0 22 14"><path d="M1 7C5 1.5 8.5 1 11 1s6 .5 10 6c-4 5.500-7.500 6-10 6S5 12.500 1 7z" fill="#505050"/><circle cx="11" cy="7" r="4.300" fill="#e9ecf3"/><circle cx="11" cy="7" r="2" fill="#505050"/></svg>
<div class="abs mono" style="left:21px;top:335.55px;font-size:7.8px;line-height:15.85px;color:#222;white-space:pre">TMjoint-R</div>
<div class="abs" style="left:107.200px;top:336.45px;width:15px;height:10.3px;background:#408080"></div>
<svg class="abs" style="left:129.7px;top:336.8px" width="8.400" height="8.400" viewBox="0 0 18 18"><g fill="#3c3c3c"><path d="M9 2.600a6.400 6.400 0 1 0 0 12.800a6.400 6.400 0 1 0 0-12.800zm0 3.400a3 3 0 1 1 0 6a3 3 0 1 1 0-6z" fill-rule="evenodd"/><rect x="7.300" y="0" width="3.400" height="4" transform="rotate(0 9 9)"/><rect x="7.300" y="0" width="3.400" height="4" transform="rotate(45 9 9)"/><rect x="7.300" y="0" width="3.400" height="4" transform="rotate(90 9 9)"/><rect x="7.300" y="0" width="3.400" height="4" transform="rotate(135 9 9)"/><rect x="7.300" y="0" width="3.400" height="4" transform="rotate(180 9 9)"/><rect x="7.300" y="0" width="3.400" height="4" transform="rotate(225 9 9)"/><rect x="7.300" y="0" width="3.400" height="4" transform="rotate(270 9 9)"/><rect x="7.300" y="0" width="3.400" height="4" transform="rotate(315 9 9)"/></g></svg>
<div class="abs" style="left:0;top:348.70px;width:142px;height:15.95px;background:#ffffff"></div>
<svg class="abs" style="left:1.8px;top:352.3px" width="12.500" height="8" viewBox="0 0 22 14"><path d="M1 7C5 1.5 8.5 1 11 1s6 .5 10 6c-4 5.500-7.500 6-10 6S5 12.500 1 7z" fill="#505050"/><circle cx="11" cy="7" r="4.300" fill="#ffffff"/><circle cx="11" cy="7" r="2" fill="#505050"/></svg>
<div class="abs mono" style="left:21px;top:351.40px;font-size:7.8px;line-height:15.85px;color:#222;white-space:pre">Cochlea-L</div>
<div class="abs" style="left:107.200px;top:352.30px;width:15px;height:10.3px;background:#400040"></div>
<svg class="abs" style="left:129.7px;top:352.7px" width="8.400" height="8.400" viewBox="0 0 18 18"><g fill="#3c3c3c"><path d="M9 2.600a6.400 6.400 0 1 0 0 12.800a6.400 6.400 0 1 0 0-12.800zm0 3.400a3 3 0 1 1 0 6a3 3 0 1 1 0-6z" fill-rule="evenodd"/><rect x="7.300" y="0" width="3.400" height="4" transform="rotate(0 9 9)"/><rect x="7.300" y="0" width="3.400" height="4" transform="rotate(45 9 9)"/><rect x="7.300" y="0" width="3.400" height="4" transform="rotate(90 9 9)"/><rect x="7.300" y="0" width="3.400" height="4" transform="rotate(135 9 9)"/><rect x="7.300" y="0" width="3.400" height="4" transform="rotate(180 9 9)"/><rect x="7.300" y="0" width="3.400" height="4" transform="rotate(225 9 9)"/><rect x="7.300" y="0" width="3.400" height="4" transform="rotate(270 9 9)"/><rect x="7.300" y="0" width="3.400" height="4" transform="rotate(315 9 9)"/></g></svg>
<div class="abs" style="left:0;top:364.55px;width:142px;height:15.95px;background:#e9ecf3"></div>
<svg class="abs" style="left:1.8px;top:368.2px" width="12.500" height="8" viewBox="0 0 22 14"><path d="M1 7C5 1.5 8.5 1 11 1s6 .5 10 6c-4 5.500-7.500 6-10 6S5 12.500 1 7z" fill="#505050"/><circle cx="11" cy="7" r="4.300" fill="#e9ecf3"/><circle cx="11" cy="7" r="2" fill="#505050"/></svg>
<div class="abs mono" style="left:21px;top:367.25px;font-size:7.8px;line-height:15.85px;color:#222;white-space:pre">Cochlea-R</div>
<div class="abs" style="left:107.200px;top:368.15px;width:15px;height:10.3px;background:#800080"></div>
<svg class="abs" style="left:129.7px;top:368.6px" width="8.400" height="8.400" viewBox="0 0 18 18"><g fill="#3c3c3c"><path d="M9 2.600a6.400 6.400 0 1 0 0 12.800a6.400 6.400 0 1 0 0-12.800zm0 3.400a3 3 0 1 1 0 6a3 3 0 1 1 0-6z" fill-rule="evenodd"/><rect x="7.300" y="0" width="3.400" height="4" transform="rotate(0 9 9)"/><rect x="7.300" y="0" width="3.400" height="4" transform="rotate(45 9 9)"/><rect x="7.300" y="0" width="3.400" height="4" transform="rotate(90 9 9)"/><rect x="7.300" y="0" width="3.400" height="4" transform="rotate(135 9 9)"/><rect x="7.300" y="0" width="3.400" height="4" transform="rotate(180 9 9)"/><rect x="7.300" y="0" width="3.400" height="4" transform="rotate(225 9 9)"/><rect x="7.300" y="0" width="3.400" height="4" transform="rotate(270 9 9)"/><rect x="7.300" y="0" width="3.400" height="4" transform="rotate(315 9 9)"/></g></svg>
<div class="abs" style="left:0;top:380.40px;width:142px;height:15.95px;background:#ffffff"></div>
<svg class="abs" style="left:1.8px;top:384.0px" width="12.500" height="8" viewBox="0 0 22 14"><path d="M1 7C5 1.5 8.5 1 11 1s6 .5 10 6c-4 5.500-7.500 6-10 6S5 12.500 1 7z" fill="#505050"/><circle cx="11" cy="7" r="4.300" fill="#ffffff"/><circle cx="11" cy="7" r="2" fill="#505050"/></svg>
<div class="abs mono" style="left:21px;top:383.10px;font-size:7.8px;line-height:15.85px;color:#222;white-space:pre">Submandibular-L</div>
<div class="abs" style="left:107.200px;top:384.00px;width:15px;height:10.3px;background:#008000"></div>
<svg class="abs" style="left:129.7px;top:384.4px" width="8.400" height="8.400" viewBox="0 0 18 18"><g fill="#3c3c3c"><path d="M9 2.600a6.400 6.400 0 1 0 0 12.800a6.400 6.400 0 1 0 0-12.800zm0 3.400a3 3 0 1 1 0 6a3 3 0 1 1 0-6z" fill-rule="evenodd"/><rect x="7.300" y="0" width="3.400" height="4" transform="rotate(0 9 9)"/><rect x="7.300" y="0" width="3.400" height="4" transform="rotate(45 9 9)"/><rect x="7.300" y="0" width="3.400" height="4" transform="rotate(90 9 9)"/><rect x="7.300" y="0" width="3.400" height="4" transform="rotate(135 9 9)"/><rect x="7.300" y="0" width="3.400" height="4" transform="rotate(180 9 9)"/><rect x="7.300" y="0" width="3.400" height="4" transform="rotate(225 9 9)"/><rect x="7.300" y="0" width="3.400" height="4" transform="rotate(270 9 9)"/><rect x="7.300" y="0" width="3.400" height="4" transform="rotate(315 9 9)"/></g></svg>
<div class="abs" style="left:0;top:396.25px;width:142px;height:15.95px;background:#e9ecf3"></div>
<svg class="abs" style="left:1.8px;top:399.9px" width="12.500" height="8" viewBox="0 0 22 14"><path d="M1 7C5 1.5 8.5 1 11 1s6 .5 10 6c-4 5.500-7.500 6-10 6S5 12.500 1 7z" fill="#505050"/><circle cx="11" cy="7" r="4.300" fill="#e9ecf3"/><circle cx="11" cy="7" r="2" fill="#505050"/></svg>
<div class="abs mono" style="left:21px;top:398.95px;font-size:7.8px;line-height:15.85px;color:#222;white-space:pre">Submandibular-R</div>
<div class="abs" style="left:107.200px;top:399.85px;width:15px;height:10.3px;background:#008040"></div>
<svg class="abs" style="left:129.7px;top:400.2px" width="8.400" height="8.400" viewBox="0 0 18 18"><g fill="#3c3c3c"><path d="M9 2.600a6.400 6.400 0 1 0 0 12.800a6.400 6.400 0 1 0 0-12.800zm0 3.400a3 3 0 1 1 0 6a3 3 0 1 1 0-6z" fill-rule="evenodd"/><rect x="7.300" y="0" width="3.400" height="4" transform="rotate(0 9 9)"/><rect x="7.300" y="0" width="3.400" height="4" transform="rotate(45 9 9)"/><rect x="7.300" y="0" width="3.400" height="4" transform="rotate(90 9 9)"/><rect x="7.300" y="0" width="3.400" height="4" transform="rotate(135 9 9)"/><rect x="7.300" y="0" width="3.400" height="4" transform="rotate(180 9 9)"/><rect x="7.300" y="0" width="3.400" height="4" transform="rotate(225 9 9)"/><rect x="7.300" y="0" width="3.400" height="4" transform="rotate(270 9 9)"/><rect x="7.300" y="0" width="3.400" height="4" transform="rotate(315 9 9)"/></g></svg>
<div class="abs" style="left:0;top:412.10px;width:142px;height:15.95px;background:#ffffff"></div>
<svg class="abs" style="left:1.8px;top:415.7px" width="12.500" height="8" viewBox="0 0 22 14"><path d="M1 7C5 1.5 8.5 1 11 1s6 .5 10 6c-4 5.500-7.500 6-10 6S5 12.500 1 7z" fill="#505050"/><circle cx="11" cy="7" r="4.300" fill="#ffffff"/><circle cx="11" cy="7" r="2" fill="#505050"/></svg>
<div class="abs mono" style="left:21px;top:414.80px;font-size:7.8px;line-height:15.85px;color:#222;white-space:pre">Pharyngeal const</div>
<div class="abs" style="left:107.200px;top:415.70px;width:15px;height:10.3px;background:#ff00ff"></div>
<svg class="abs" style="left:129.7px;top:416.1px" width="8.400" height="8.400" viewBox="0 0 18 18"><g fill="#3c3c3c"><path d="M9 2.600a6.400 6.400 0 1 0 0 12.800a6.400 6.400 0 1 0 0-12.800zm0 3.400a3 3 0 1 1 0 6a3 3 0 1 1 0-6z" fill-rule="evenodd"/><rect x="7.300" y="0" width="3.400" height="4" transform="rotate(0 9 9)"/><rect x="7.300" y="0" width="3.400" height="4" transform="rotate(45 9 9)"/><rect x="7.300" y="0" width="3.400" height="4" transform="rotate(90 9 9)"/><rect x="7.300" y="0" width="3.400" height="4" transform="rotate(135 9 9)"/><rect x="7.300" y="0" width="3.400" height="4" transform="rotate(180 9 9)"/><rect x="7.300" y="0" width="3.400" height="4" transform="rotate(225 9 9)"/><rect x="7.300" y="0" width="3.400" height="4" transform="rotate(270 9 9)"/><rect x="7.300" y="0" width="3.400" height="4" transform="rotate(315 9 9)"/></g></svg>
<div class="abs" style="left:0;top:427.95px;width:142px;height:15.95px;background:#e9ecf3"></div>
<div class="abs mono" style="left:21px;top:430.65px;font-size:7.8px;line-height:15.85px;color:#222;white-space:pre"></div>
<div class="abs" style="left:107.200px;top:431.55px;width:15px;height:10.3px;background:#cc88ff"></div>
</div>
<div class="abs" style="left:16.0px;top:66px;width:1.400px;height:446.6px;background:#e2e5ee"></div>
<div class="abs" style="left:103.1px;top:66px;width:1.400px;height:446.6px;background:#e2e5ee"></div>
<div class="abs" style="left:126.1px;top:66px;width:1.400px;height:446.6px;background:#e2e5ee"></div>
<div class="abs" style="left:143px;top:66px;width:1px;height:14px;background:#d4d7e0"></div>
<svg class="abs" style="left:110px;top:68.800px" width="11" height="11" viewBox="0 0 22 22"><rect x="2" y="11" width="11" height="9" fill="#333"/><path d="M10.500 11V7a4 4 0 0 1 8 0v2" fill="none" stroke="#333" stroke-width="2"/><rect x="6.500" y="14" width="2" height="3" fill="#f6f7fb"/></svg>
<svg class="abs" style="left:131.200px;top:70.500px" width="8" height="8" viewBox="0 0 18 18"><path d="M3 2l12 14M15 3L3 16" stroke="#333" stroke-width="2.200" fill="none"/><circle cx="14.500" cy="3.500" r="2.500" fill="#333"/></svg>
<div class="abs" style="left:143.5px;top:80.3px;width:11px;height:432.3px;background:#f0f2f8"></div>
<div class="abs" style="left:145.300px;top:92px;width:5.700px;height:205px;background:#bfbfbf"></div>
<svg class="abs" style="left:145.500px;top:84.300px" width="5" height="2.600" viewBox="0 0 6 4"><path d="M0 4L3 0.500L6 4z" fill="#cacaca"/></svg>
<svg class="abs" style="left:145.500px;top:505.500px" width="5" height="2.600" viewBox="0 0 6 4"><path d="M0 0L3 3.500L6 0z" fill="#b4b4b4"/></svg>
<div class="abs" style="left:12.500px;top:527px;width:11.500px;height:1.6px;background:#1f84d6"></div><div class="abs" style="left:17.400px;top:522px;width:1.6px;height:11.500px;background:#1f84d6"></div>
<div class="abs" style="left:42px;top:527px;width:12px;height:1.6px;background:#1f84d6"></div>
<svg class="abs" style="left:72.500px;top:522.500px" width="11" height="10" viewBox="0 0 22 20"><path d="M0 0h22v20H0z" fill="#1f84d6"/><rect x="5" y="1.500" width="12" height="6" fill="#eef1f9"/><rect x="12.500" y="2" width="3" height="5" fill="#1f84d6"/><rect x="4.500" y="11.500" width="13" height="8.500" fill="#eef1f9"/><rect x="6.500" y="13.500" width="9" height="1.600" fill="#1f84d6"/><rect x="6.500" y="16.500" width="9" height="1.600" fill="#1f84d6"/></svg>
<svg class="abs" style="left:102.500px;top:522px" width="11" height="11" viewBox="0 0 22 22"><path d="M4 9V2h10l5 5v13H9" fill="none" stroke="#1f84d6" stroke-width="2.400"/><path d="M1 14h8M6 10.500l4 3.500l-4 3.500" fill="none" stroke="#1f84d6" stroke-width="2.400"/></svg>
<svg class="abs" style="left:131px;top:521.500px" width="14" height="13" viewBox="0 0 28 26"><path d="M9 3C3 5 1 10 3 15c2 5 7 6 11 5c5-1 7-6 5-11C17 4 13 2 9 3z" fill="none" stroke="#9a9a9a" stroke-width="2"/><circle cx="19" cy="18" r="6.500" fill="#8c8c8c"/><path d="M15.500 18l2.500 2.500l4.500-5" stroke="#fff" stroke-width="1.800" fill="none"/></svg>
<div class="abs" style="left:1px;top:538px;width:153.500px;height:1px;background:#a8a8a8"></div>
<div class="abs" style="left:7px;top:551px;width:138px;height:21.3px;background:#fff"></div>
<div class="abs mono" style="left:8.800px;top:553.5px;width:89.500px;height:15px;border:1px solid #c8c8c8;border-radius:2px;background:#fff;font-size:7.8px;line-height:14.500px;padding-left:1px;color:#222">GTVnx</div>
<div class="abs" style="left:106px;top:552.7px;width:37px;height:17.5px;background:#ff0000"></div>
<div class="abs" style="left:10px;top:589px"><span class="cj" style="width:46.50px;color:#111;">结构类型：</span></div>
<div class="abs mono" style="left:61.500px;top:585.5px;width:82.300px;height:17px;border:1px solid #d0d0d0;background:#fff;font-size:7.8px;line-height:18px;padding-left:4.500px;color:#222">GTV</div>
<svg class="abs" style="left:133.500px;top:593px" width="5" height="3" viewBox="0 0 5 3"><path d="M0 0h5L2.500 3z" fill="#444"/></svg>
<div class="abs" style="left:10px;top:613px;white-space:nowrap"><span class="cj" style="width:18.60px;color:#111;">当前</span><span class="mono" style="font-size:7.8px;color:#111;vertical-align:top;line-height:10px">/</span><span class="cj" style="width:37.20px;color:#111;">总层数：</span></div>
<div class="abs mono" style="left:100px;top:613.600px;font-size:7.8px;line-height:10px;color:#222">0/9</div>
<div class="abs" style="left:1px;top:626.300px;width:153.500px;height:1px;background:#cdd0d6"></div>
<div class="abs" style="left:9.0px;top:634.0px;width:60.0px;height:19.8px;background:#c8c8c8;text-align:center;padding-top:5.2px"><span class="cj" style="width:37.20px;color:#a3a3b8;">模板保存</span></div>
<div class="abs" style="left:87.0px;top:634.0px;width:59.5px;height:19.8px;background:#c8c8c8;text-align:center;padding-top:5.2px"><span class="cj" style="width:37.20px;color:#a3a3b8;">模板选择</span></div>
<div class="abs" style="left:10.0px;top:660.0px;width:59.3px;height:19.0px;background:#c8c8c8;text-align:center;padding-top:4.8px"><span class="cj" style="width:37.20px;color:#a3a3b8;">发送导出</span></div>
<div class="abs" style="left:87.0px;top:660.0px;width:59.5px;height:19.0px;background:#c8c8c8;text-align:center;padding-top:4.8px"><span class="cj" style="width:37.20px;color:#a3a3b8;">靶区审核</span></div><svg class="abs" style="left:0;top:26px" width="1120" height="41" viewBox="0 26 1120 41">
<rect x="20.500" y="35.300" width="20" height="3" rx="1" fill="#a8d4ee"/><rect x="19" y="36.800" width="23" height="3" rx="1" fill="#7fbfe6"/>
<rect x="17.300" y="38.800" width="26.400" height="16.800" rx="1" fill="#f4f4f4" stroke="#2f86d2" stroke-width="0.900"/>
<path d="M28.800 49.800c2.500-3.300 4.500-3.900 6.200-3.900s3.700.6 6.200 3.900c-2.500 3.300-4.500 3.900-6.200 3.900s-3.700-.6-6.200-3.900z" fill="#2080d8"/><circle cx="35" cy="49.800" r="2.300" fill="#fff"/><circle cx="35" cy="49.800" r="1.200" fill="#2080d8"/>
<g transform="translate(80 45.200) rotate(45) scale(1.150)"><rect x="-1.900" y="-9.800" width="3.800" height="3" rx="0.800" fill="#2080d8"/><path d="M-1.900 -6v11.500L0 9.600L1.900 5.500V-6z" fill="#f4f8fb" stroke="#2080d8" stroke-width="0.800"/><path d="M-1.900 5.500h3.800" stroke="#2080d8" stroke-width="0.600"/></g>
<path d="M67 36.500c-3.500 4.500-2 9 .5 12c1.800 2.200 2.300 4.500 1.200 6.300c3.500 1 8.500 .2 11.300-1.600" fill="none" stroke="#2080d8" stroke-width="0.800"/>
<rect x="110" y="35.300" width="25.800" height="21.400" rx="1" fill="#dcdcdc" stroke="#c4c4c4" stroke-width="0.600"/>
<path d="M112.500 36.800c6 .3 7.500 3 9 9s3 9.300 11 9.800" fill="none" stroke="#9a9a9a" stroke-width="0.600"/><path d="M118 36.800c5 .3 6 3 7.500 9s2.800 9.300 9 9.800" fill="none" stroke="#a8a8a8" stroke-width="0.500"/>
<path d="M111.200 36v19.800h24" fill="none" stroke="#8a8a8a" stroke-width="0.600" stroke-dasharray="1 1.200"/>
<g transform="translate(167.300 56) rotate(45)"><rect x="-2.200" y="-8.800" width="4.400" height="3.300" rx="1" fill="#2080d8"/><path d="M-2.100 -4.800V5L0 8.600L2.100 5V-4.800z" fill="#f2f2f2" stroke="#2080d8" stroke-width="0.900"/></g>
<path d="M171.600 63.300h3.600v-3.600z" fill="#2080d8"/>
<g transform="translate(187.800 55.800) rotate(45)"><path d="M-1.100 -9.500c.8-.5 1.400-.5 2.200 0L1.700 1h-3.400z" fill="#f2f2f2" stroke="#2080d8" stroke-width="0.800"/><rect x="-2" y="1" width="4" height="2.200" fill="#d8e8f4" stroke="#2080d8" stroke-width="0.700"/><path d="M-2.300 3.400h4.600c.6 2.500-.5 4.500-2.300 6.200c-1.800-1.700-2.900-3.700-2.300-6.200z" fill="#2080d8"/></g>
<path d="M191.700 63.300h3.600v-3.600z" fill="#2080d8"/>
<g transform="translate(209.0 56.200) rotate(45)"><path d="M-1.100 -9.500c.8-.5 1.400-.5 2.200 0L1.700 1h-3.400z" fill="#f2f2f2" stroke="#2080d8" stroke-width="0.800"/><rect x="-2" y="1" width="4" height="2.200" fill="#d8e8f4" stroke="#2080d8" stroke-width="0.700"/><path d="M-2.300 3.400h4.600c.6 2.500-.5 4.500-2.300 6.200c-1.800-1.700-2.900-3.700-2.300-6.200z" fill="#2080d8"/></g>
<path d="M204.300 49l.9 2.300l2.400-.4l-1.500 1.900l1.500 1.900l-2.400-.4l-.9 2.300l-.9-2.300l-2.400.4l1.500-1.900l-1.500-1.900l2.400.4z" fill="#2080d8"/>
<path d="M212.200 63.300h3.600v-3.600z" fill="#2080d8"/>
<g transform="translate(229.200 56.300) rotate(-42)"><rect x="-6.600" y="-4" width="13.200" height="8" rx="1.200" fill="#f2f2f2" stroke="#2080d8" stroke-width="0.900"/><path d="M-6.600 -2.800a1.200 1.200 0 0 1 1.200-1.200H-.5v8h-4.900a1.200 1.200 0 0 1-1.200-1.200z" fill="#2080d8"/></g>
<path d="M233.400 63.300h3.600v-3.600z" fill="#2080d8"/>
<path d="M248.500 51.800v8" stroke="#2080d8" stroke-width="0.900" stroke-dasharray="1.300 0.700"/><path d="M246.600 58.800h3.800l-1.900 2.600z" fill="#2080d8"/>
<ellipse cx="255.800" cy="53.800" rx="4.300" ry="2.100" fill="none" stroke="#2080d8" stroke-width="0.900"/><path d="M251.500 56.200c0 2.800 8.600 2.800 8.600 0M251.500 58.800c0 2.800 8.600 2.800 8.600 0" fill="none" stroke="#2080d8" stroke-width="0.900"/>
<circle cx="273.600" cy="56.200" r="6.200" fill="none" stroke="#2080d8" stroke-width="0.900" stroke-dasharray="2.600 1.800"/><path d="M277.700 56.500h4l-2 2.600z" fill="#2080d8"/>
<path d="M294.600 49.200v6" stroke="#2080d8" stroke-width="0.900"/><path d="M292.700 53c-2.200-.8-4.500 2.500-4.500 6.500c0 2.500 1 3.300 2.700 3.300s2.800-.9 2.800-2.800z" fill="#1a74cc"/><path d="M296.300 53c2.200-.8 4.700 2.500 4.700 6.500c0 2.500-1 3.300-2.700 3.300s-2.800-.9-2.800-2.800z" fill="#8fc3ee"/><path d="M297.300 54c1.500 0 3 2 3.300 4.500" fill="none" stroke="#155fa8" stroke-width="1"/>
<path d="M316 48.300v10" stroke="#2080d8" stroke-width="1.800" stroke-dasharray="1.400 0.500"/>
<path d="M309.800 57.300c1.500-2 4-1.800 5.200.4h2c1.200-2.200 3.700-2.400 5.200-.4c.8 1.300-.4 2.800-2 3l-1.200 3.300c-1.300-.2-2.200-1-3-2.200c-.8 1.200-1.700 2-3 2.200l-1.200-3.300c-1.600-.2-2.800-1.700-2-3z" fill="#2080d8"/><circle cx="314.200" cy="61.500" r="1" fill="#eef1f9"/><circle cx="317.800" cy="61.500" r="1" fill="#eef1f9"/>
<path d="M331 56.500c-1.300-2.800 1-5.800 4.500-6.300c3.500-.8 7.500.5 8.300 4c.5 2.500-1 4-3 4.300c-.5 1-1.500 1.200-2.500 1l-.8 3l-1.500-.3l-.5-2.500c-2 .3-3.800-.8-4.500-3.200z" fill="none" stroke="#2080d8" stroke-width="1.100"/><path d="M333 55c1.500-1.500 3.500-1 4.500.2c1-1.800 3.500-1.800 4.500-.5M335 58c1-.8 2.500-.8 3.500 0M336 52c1 .5 2 .5 3 0" fill="none" stroke="#2080d8" stroke-width="0.800"/>
<path d="M351 56.200c2.500-3.800 5-4.600 7-4.600s4.500.8 7 4.600c-2.500 3.800-5 4.600-7 4.600s-4.500-.8-7-4.600z" fill="none" stroke="#2080d8" stroke-width="1"/><circle cx="358.300" cy="56.200" r="2.700" fill="#2080d8"/><circle cx="359.600" cy="55.200" r="0.800" fill="#eef1f9"/>
<path d="M376.800 53.500v6.500" stroke="#8fc3ee" stroke-width="1.300"/><path d="M374.800 54.200l2-2.600l2 2.600z" fill="#2080d8"/>
<circle cx="383.500" cy="52.200" r="2.900" fill="none" stroke="#2080d8" stroke-width="0.900"/><circle cx="383.500" cy="58.800" r="3.100" fill="none" stroke="#2080d8" stroke-width="0.900"/>
<path d="M396.800 51.500v7" stroke="#2080d8" stroke-width="0.900"/><path d="M394.800 57.500l2 2.600l2-2.600z" fill="#2080d8"/>
<circle cx="403.600" cy="52.200" r="2.900" fill="none" stroke="#2080d8" stroke-width="0.900"/><circle cx="403.600" cy="58.800" r="3.100" fill="none" stroke="#2080d8" stroke-width="0.900"/>
<path d="M418.500 52c1.500-2 3.500-1.500 5 0c1.500-1.500 3.500-2 5 0c1.200 1.800 0 3.200-.8 4.300c.8 1.100 2 2.500.8 4.300c-1.500 2-3.500 1.500-5 0c-1.500 1.500-3.500 2-5 0c-1.200-1.800 0-3.200.8-4.300c-.8-1.100-2-2.500-.8-4.300z" fill="#c2c2c2" stroke="#a0a0a0" stroke-width="0.700" stroke-dasharray="1.500 1"/>
<path d="M427.600 63.300h3.600v-3.600z" fill="#8a8a8a"/>
<ellipse cx="444" cy="56.200" rx="5.200" ry="3.800" fill="#c4c4c4" stroke="#a0a0a0" stroke-width="0.700"/><path d="M442.800 51.500l1.200-1.500l1.200 1.500zM442.800 61l1.200 1.300l1.200-1.300zM437.600 56.200l-1.300 0l1.300-1zM450.400 55.200l1.300 1l-1.300 1z" fill="#8e8e8e"/>
<path d="M448.100 63.300h3.600v-3.600z" fill="#8a8a8a"/>
<circle cx="461.700" cy="55.800" r="4.400" fill="#d6eaf6" stroke="#2080d8" stroke-width="0.900"/><circle cx="466.300" cy="55.800" r="4.400" fill="#d6eaf6" fill-opacity="0.600" stroke="#2080d8" stroke-width="0.900"/>
<path d="M469 49h2.800v2.800z" fill="#2080d8"/>
<path d="M459.200 61.200l1.800 1.800m0-1.800l-1.800 1.800" stroke="#2080d8" stroke-width="0.700"/>
<path d="M469.400 63.500h3.600v-3.600z" fill="#2080d8"/>
<circle cx="482.900" cy="55.800" r="4.600" fill="#d6eaf6" stroke="#2080d8" stroke-width="0.900"/><circle cx="487.500" cy="55.800" r="4.600" fill="#d6eaf6" fill-opacity="0.600" stroke="#2080d8" stroke-width="0.900"/>
<path d="M490.400 63.500h3.600v-3.600z" fill="#2080d8"/>
<text x="501.300" y="61.300" font-family="Liberation Serif,serif" font-weight="bold" font-size="15.500" fill="#2080d8">S</text>
<path d="M510.400 63.500h3.600v-3.600z" fill="#2080d8"/>
<clipPath id="cs"><circle cx="530" cy="56" r="6.300"/></clipPath><g clip-path="url(#cs)"><rect x="523" y="49.800" width="14" height="1.700" fill="#2080d8"/><rect x="523" y="52.800" width="14" height="1.700" fill="#2080d8"/><rect x="523" y="55.800" width="14" height="1.700" fill="#2080d8"/><rect x="523" y="58.800" width="14" height="1.700" fill="#2080d8"/><rect x="523" y="61.600" width="14" height="1.700" fill="#2080d8"/></g>
<rect x="545.200" y="50.500" width="12" height="10.800" fill="#d6eaf6" stroke="#2080d8" stroke-width="0.900" stroke-dasharray="2 1"/>
<circle cx="545.2" cy="50.5" r="1.100" fill="#eef1f9" stroke="#2080d8" stroke-width="0.600"/>
<circle cx="551.2" cy="50.5" r="1.100" fill="#eef1f9" stroke="#2080d8" stroke-width="0.600"/>
<circle cx="557.2" cy="50.5" r="1.100" fill="#eef1f9" stroke="#2080d8" stroke-width="0.600"/>
<circle cx="545.2" cy="55.9" r="1.100" fill="#eef1f9" stroke="#2080d8" stroke-width="0.600"/>
<circle cx="557.2" cy="55.9" r="1.100" fill="#eef1f9" stroke="#2080d8" stroke-width="0.600"/>
<circle cx="545.2" cy="61.3" r="1.100" fill="#eef1f9" stroke="#2080d8" stroke-width="0.600"/>
<circle cx="551.2" cy="61.3" r="1.100" fill="#eef1f9" stroke="#2080d8" stroke-width="0.600"/>
<circle cx="557.2" cy="61.3" r="1.100" fill="#eef1f9" stroke="#2080d8" stroke-width="0.600"/>
<path d="M547 59.500c1.500-3.500 5-3 8.300-6.500M547 57c3 1.500 5.500-.5 8.500 1.500" fill="none" stroke="#2080d8" stroke-width="0.900"/>
<path d="M569.800 49.500h8.500v10" fill="none" stroke="#9a9a9a" stroke-width="0.800"/><rect x="567.300" y="51.500" width="8.600" height="10.300" fill="#e4e4e4" stroke="#8a8a8a" stroke-width="0.800"/><path d="M568.800 53.800h5.600M568.800 55.600h5.600M568.800 57.400h5.600M568.800 59.200h5.600" stroke="#8a8a8a" stroke-width="0.700"/>
<path d="M588.500 52.800l10.500 4.500M588.500 57.800l10.500-5" stroke="#9a9a9a" stroke-width="1.200" fill="none"/><circle cx="598.300" cy="52.500" r="1.700" fill="none" stroke="#9a9a9a" stroke-width="0.900"/><circle cx="597.500" cy="59" r="1.700" fill="none" stroke="#9a9a9a" stroke-width="0.900"/><path d="M590 50.500l5 4" stroke="#9a9a9a" stroke-width="1.100"/>
<rect x="610" y="50.500" width="11.200" height="11.700" rx="1.200" fill="#eaf3fa" stroke="#2080d8" stroke-width="1"/><path d="M612.800 50.500h5.600v2.300h-5.600z" fill="#2080d8"/><path d="M614.500 49.300h2.200v1.500h-2.200z" fill="#2080d8"/><path d="M612 55h7.200M612 57.200h7.200M612 59.400h7.200" stroke="#2080d8" stroke-width="0.900"/>
<path d="M631.300 50.800l10 10M641.300 50.800l-10 10" stroke="#8e8e8e" stroke-width="1.500" fill="none"/>
<path d="M653.500 53.500l4.500-3.800v2.500c4.500.3 6.300 3.500 5.600 7c-.3 1.300-1.300 2.500-2.300 3c1-2.500.2-5.500-3.300-5.800v2.600z" fill="#2080d8"/>
<path d="M684.600 53.500l-4.500-3.800v2.500c-4.500.3-6.300 3.500-5.600 7c.3 1.300 1.300 2.500 2.300 3c-1-2.500-.2-5.500 3.300-5.800v2.600z" fill="#2080d8"/>
<path d="M700.500 50.700c1.500-.8 2.500-.3 3.300.2c.8-.5 2-1 3.500-.2c2 1 2.700 3.500 2.300 6c-.5 3-2.500 5-5.800 5c-3.300 0-5.500-2-6-5c-.4-2.500.7-5 2.700-6z" fill="#d2e6f2" stroke="#2080d8" stroke-width="0.900"/>
<circle cx="707.300" cy="60" r="2.300" fill="none" stroke="#2080d8" stroke-width="1.400" stroke-dasharray="1 .8"/><circle cx="707.300" cy="60" r="1.500" fill="#2080d8"/><circle cx="707.300" cy="60" r="0.700" fill="#eef1f9"/>
</svg><div class="view" id="v1" style="left:155.800px;top:67px;width:740.200px;height:619px">
<svg class="abs" id="v1svg" style="left:1.200px;top:0" width="739" height="619" viewBox="157 67 739 619">
<path d="M525.200 67V686" stroke="#177a17" stroke-width="1.500" stroke-dasharray="2 3.300" stroke-dashoffset="1"/><rect x="523.400" y="67" width="3.600" height="19" fill="#1a7c1a"/><path d="M522.300 78.500L525.200 70.800L528.100 78.500M523.200 76h4" stroke="#25c025" stroke-width="0.900" fill="none"/><rect x="523.500" y="667" width="3.400" height="13" fill="#1a7c1a"/><text x="522.800" y="678" font-family="Liberation Sans,sans-serif" font-size="8" fill="#25c025">P</text><path d="M157 375.400H896" stroke="#1b8c1b" stroke-width="1.200" stroke-dasharray="3 2.300"/><rect x="157" y="373.800" width="17.500" height="3.200" fill="#1a7c1a"/><text x="159.800" y="378" font-family="Liberation Sans,sans-serif" font-size="8" fill="#25c025">R</text><rect x="878.500" y="373.800" width="17.500" height="3.200" fill="#1a7c1a"/><path d="M224.500 537.200L244.800 536.300Q246.300 536.500 246 538L244.800 548.500L228 549Q224 546 223.800 540Z" fill="#fff"/><path d="M272.300 557.600L280 558.200L284 557.400L299 558.300L298.500 559.300L290 559.300L288.300 562L286.500 559.300L273 558.600Z" fill="#fff"/><path d="M304.400 580.500C330 606 356 632 381.700 654.200" stroke="#f4f4f4" stroke-width="1.100" fill="none" stroke-dasharray="17 2 9 1.500 22 2.500 14 1.500"/><path d="M380 652.500C392 661 405 667 419.600 671.700C440 677 460 679.500 478 680.600C495 681.800 510 682.600 525 682.800C545 682.600 565 681.500 585 679.800C605 678 625 675 643.700 670.300C655 666 663 660 671 653.500L669.500 652.500C660 659 652 664 641 668C622 673 603 676 584 678C565 679.800 545 680.800 525 681C510 680.800 495 680 479 678.800C460 677.500 441 675 421 669.800C406 665 393 659 381.500 651Z" fill="#fff"/><path d="M669.500 654C697 630 725 604 751.700 579" stroke="#f4f4f4" stroke-width="1.100" fill="none" stroke-dasharray="20 2 12 3 18 2 9 1.500"/><path d="M755 558L784.500 558Q785.500 560 784.800 562.500L770 563L766.500 565.300L763.500 563L758 562Z" fill="#fff"/><path d="M809.500 546H824.500L823 550.300H811Z" fill="#fff"/><path d="M405 600.800C440 606 480 612 511.500 614" stroke="#bbb" stroke-width="0.900" fill="none" stroke-dasharray="1.500 6 1 5 2 6 3 7"/><path d="M550 614C585 611 620 607 643.700 603" stroke="#aaa" stroke-width="0.900" fill="none" stroke-dasharray="2 9 1.500 10 1 7"/><path d="M173.200 652.800h8.500v1.600h-8.500zM198 652.800h8.500v1.600h-8.500z" fill="#b07a3a"/><path d="M174.800 650.800v4M204.800 650.800v4" stroke="#b07a3a" stroke-width="1.200"/><rect x="185.300" y="649.800" width="8.500" height="7.600" rx="1.500" fill="#15285e"/><path d="M187 651l5 5.500M192 651l-5 5.500" stroke="#2a50b0" stroke-width="0.800"/><ellipse cx="189.500" cy="648.200" rx="2.700" ry="2.300" fill="#1e78e0"/><path d="M180.800 647.600h2.600l.6 8h-2.600z" fill="#d0d0d0"/><path d="M195.800 647.600h2.600l-.6 8.200h-2.600z" fill="#d0d0d0"/><ellipse cx="183" cy="656.800" rx="1.600" ry="2.300" fill="#e83020"/><ellipse cx="196.300" cy="656.800" rx="1.600" ry="2.300" fill="#e83020"/><rect x="157" y="684.800" width="739" height="1.200" fill="#808080"/>
</svg>
<div class="gt" style="left:4.4px;top:3.55px;">CT1</div><div class="gt" style="left:4.4px;top:14.67px;"><span class="cj" style="width:18.60px;color:#20b420;position:relative;top:1.2px">层号</span>: 39.0/122</div><div class="gt" style="left:4.4px;top:25.79px;"><span class="cj" style="width:27.90px;color:#20b420;position:relative;top:1.2px">层坐标</span>: 114.0mm</div><div class="gt" style="left:4.4px;top:36.91px;">CT</div><div class="gt" style="left:4.4px;top:48.03px;">NPC12</div><div class="gt" style="left:4.4px;top:59.15px;">NPC12</div>
<div class="gt r" style="left:614.7px;top:3.55px;width:120px;text-align:right;">20180115</div><div class="gt r" style="left:614.7px;top:14.67px;width:120px;text-align:right;">W: 80</div><div class="gt r" style="left:614.7px;top:25.79px;width:120px;text-align:right;">L: 40</div>
<div class="gt" style="left:66.2px;top:549.95px;">120</div><div class="gt" style="left:66.2px;top:561.07px;">217</div><div class="gt" style="left:66.2px;top:572.19px;">Brilliance Big Bore</div><div class="gt" style="left:66.2px;top:583.31px;"><span class="cj" style="width:37.20px;color:#20b420;position:relative;top:1.2px">勾靶时间</span>: 2019/06/14 18:20:46</div><div class="gt" style="left:66.2px;top:594.43px;"><span class="cj" style="width:37.20px;color:#20b420;position:relative;top:1.2px">病人体位</span>:  HFS</div>
</div>
<div class="abs" style="left:896px;top:67px;width:2px;height:619px;background:#8a8a8a"></div>
<div class="view" id="v2" style="left:898px;top:67px;width:370px;height:205px">
<svg class="abs" style="left:0;top:0" width="370" height="205" viewBox="898 67 370 205">
<defs><filter id="nz" x="0" y="0" width="100%" height="100%" color-interpolation-filters="sRGB"><feTurbulence type="fractalNoise" baseFrequency="0.33" numOctaves="2" seed="7" result="t"/><feColorMatrix in="t" type="matrix" values="0.800 0 0 0 0.020  0.800 0 0 0 0.020  0.800 0 0 0 0.020  0 0 0 0 1" result="n"/><feComposite in="n" in2="SourceGraphic" operator="in" result="c"/><feMerge><feMergeNode in="SourceGraphic"/><feMergeNode in="c"/></feMerge></filter><filter id="nz3" x="0" y="0" width="100%" height="100%" color-interpolation-filters="sRGB"><feTurbulence type="fractalNoise" baseFrequency="0.45 0.10" numOctaves="2" seed="5" result="t"/><feColorMatrix in="t" type="matrix" values="1.500 0 0 0 -0.050  1.500 0 0 0 -0.050  1.500 0 0 0 -0.050  0 0 0 0 1" result="n"/><feComposite in="n" in2="SourceGraphic" operator="in"/></filter><filter id="nz2" x="0" y="0" width="100%" height="100%" color-interpolation-filters="sRGB"><feTurbulence type="fractalNoise" baseFrequency="0.4" numOctaves="2" seed="11" result="t"/><feColorMatrix in="t" type="matrix" values="1.200 0 0 0 0.280  1.200 0 0 0 0.280  1.200 0 0 0 0.280  0 0 0 0 1" result="n"/><feComposite in="n" in2="SourceGraphic" operator="in"/></filter><filter id="bl"><feGaussianBlur stdDeviation="0.6"/></filter><clipPath id="hc2"><path d="M1087 71.400C1096 71.500 1101 72.500 1105.800 73.700C1112 76 1117 78.500 1121 81.500C1127 86 1130 90 1132 95.400C1136 103 1137.500 109 1137.500 115.500C1137.800 123 1137 129 1135 135.500C1133 142 1130 147 1127.500 152.500C1125 158 1124 165 1124 172C1124.300 177 1125.500 183 1128.800 190.700C1132 195 1135.500 196.500 1138.200 198.800C1140.500 201 1141.500 204 1142.200 206.800L1143.500 212.200L1150.200 212.900C1153 212.500 1154.500 211.500 1155.600 210.200C1157.500 209 1157.500 208 1157 207.500C1155.500 207 1154.300 206.500 1153.600 205.500L1152.600 193.400L1152 68.500L1160.700 68.500L1160.700 213.500C1159 216 1157.200 218 1157 220.200C1157.500 223 1161 224.500 1161 227C1161 229.500 1157.500 231 1157.500 233C1157.500 235.500 1161 237.500 1161 240C1161 242.500 1158 244 1158 246C1158 248.500 1161 250 1161 252L1160 262L1161 269.200L1045.200 269.200L1045.200 268C1046 262 1047.500 257 1049.400 252.500C1052 246 1055.500 240 1058 234C1060.500 228 1061.800 223 1061.800 218.500C1061.800 213 1060 208.500 1058 204.600C1054.500 198.500 1050 193.500 1045.500 189.200C1040 184.500 1035 181 1031.600 177.600C1029.500 175.500 1028 173.500 1027.200 172.400C1025.500 171 1023.600 170 1023.600 168.800C1023.800 167 1026.500 165.500 1027.600 163.400C1027.600 161.500 1026.300 160 1026.300 158C1026.300 155 1027.200 152 1026.700 149.800C1025 148.500 1022.500 147.500 1020.800 146.200C1018.800 144.800 1017.800 143 1018.100 141.700C1018.800 140 1020.500 138.500 1021.800 137.200C1024.500 134.500 1027.500 132 1029.400 129C1030.500 126 1030.800 123 1030.600 120C1030 117.500 1030 117.500 1030 117C1030.500 108 1033.500 99.500 1037.800 92.300C1041.500 86.500 1046.500 81.500 1053 77.600C1059 74.500 1065 72.800 1071.800 71.900C1077 71.400 1082 71.300 1087 71.400Z"/></clipPath></defs><g clip-path="url(#hc2)"><path d="M1087 71.400C1096 71.500 1101 72.500 1105.800 73.700C1112 76 1117 78.500 1121 81.500C1127 86 1130 90 1132 95.400C1136 103 1137.500 109 1137.500 115.500C1137.800 123 1137 129 1135 135.500C1133 142 1130 147 1127.500 152.500C1125 158 1124 165 1124 172C1124.300 177 1125.500 183 1128.800 190.700C1132 195 1135.500 196.500 1138.200 198.800C1140.500 201 1141.500 204 1142.200 206.800L1143.500 212.200L1150.200 212.900C1153 212.500 1154.500 211.500 1155.600 210.200C1157.500 209 1157.500 208 1157 207.500C1155.500 207 1154.300 206.500 1153.600 205.500L1152.600 193.400L1152 68.500L1160.700 68.500L1160.700 213.500C1159 216 1157.200 218 1157 220.200C1157.500 223 1161 224.500 1161 227C1161 229.500 1157.500 231 1157.500 233C1157.500 235.500 1161 237.500 1161 240C1161 242.500 1158 244 1158 246C1158 248.500 1161 250 1161 252L1160 262L1161 269.200L1045.200 269.200L1045.200 268C1046 262 1047.500 257 1049.400 252.500C1052 246 1055.500 240 1058 234C1060.500 228 1061.800 223 1061.800 218.500C1061.800 213 1060 208.500 1058 204.600C1054.500 198.500 1050 193.500 1045.500 189.200C1040 184.500 1035 181 1031.600 177.600C1029.500 175.500 1028 173.500 1027.200 172.400C1025.500 171 1023.600 170 1023.600 168.800C1023.800 167 1026.500 165.500 1027.600 163.400C1027.600 161.500 1026.300 160 1026.300 158C1026.300 155 1027.200 152 1026.700 149.800C1025 148.500 1022.500 147.500 1020.800 146.200C1018.800 144.800 1017.800 143 1018.100 141.700C1018.800 140 1020.500 138.500 1021.800 137.200C1024.500 134.500 1027.500 132 1029.400 129C1030.500 126 1030.800 123 1030.600 120C1030 117.500 1030 117.500 1030 117C1030.500 108 1033.500 99.500 1037.800 92.300C1041.500 86.500 1046.500 81.500 1053 77.600C1059 74.500 1065 72.800 1071.800 71.900C1077 71.400 1082 71.300 1087 71.400Z" fill="#f4f4f4"/><path d="M1129 150L1152.600 150L1152.600 205L1150 212L1143.800 211.500L1142 206C1140 201 1136 198 1131 193C1127.500 187 1126.500 178 1126.500 172C1126.500 165 1127.500 158 1129 150Z" fill="#000"/><path d="M1128 152C1131 146 1134.500 140 1136.500 133L1152.600 133L1152.600 152Z" fill="#000"/><path d="M1136.500 135C1139 128 1139.800 121 1139.500 115C1139.500 108 1137.500 101 1134 94.500C1131 88.500 1127 84 1122 80.500C1117 76.500 1111 74 1105 72.500L1102 68L1152.600 68L1152.600 135Z" fill="#000"/><path d="M1143.500 212.500L1150.500 213.300C1154 212.500 1156 211 1157.500 209L1159.500 215C1157 217.500 1155.500 219 1155.500 221L1157 232L1156 246L1157.500 262L1158 267.500L1150 267.500L1148.500 240C1148 230 1146 220 1143.500 212.500Z" fill="#000"/><path d="M1040.100 112.400C1040 108 1040.500 104 1041.700 100C1043.500 95.500 1046.500 92 1050.200 89.200C1054.500 86 1059 83.800 1064.100 82.200C1070.500 80.500 1077 79.700 1084.200 79.900C1091 80.200 1097 81.200 1102.700 83C1109 85.500 1114 89 1118.200 93.800C1122.500 98.500 1125.500 103.500 1127.500 109.300C1129 113.500 1130 117.500 1129.800 121.600C1129 125.500 1127 129 1124.400 132.500C1121.500 136.500 1118.500 140 1115.100 143.300C1111.500 146.500 1107.500 150 1102.700 152.600C1100 154.500 1097 156 1094.200 157.200C1092.500 153 1091.500 148 1091.900 143.300C1092 138 1093 133 1093.500 127.800C1088.500 126 1083.500 124.500 1078 124C1072.500 124 1066.500 124.800 1061 124.700C1056 124.500 1051.500 123.800 1047.100 122.400C1043.500 119.500 1041 116 1040.100 112.400Z" fill="#7e7e7e" filter="url(#nz)"/><g filter="url(#bl)"><path d="M1068 109.500C1069 105 1073 103.500 1077 103.200C1083 102.500 1089 103 1093 106.500C1095.500 109 1095.500 112 1093.500 114C1092 110 1088.500 107.500 1084 107.300C1080 107.300 1077 108 1075 110.500C1073 112.500 1069.500 112.500 1068 109.500Z" fill="#2a2a2a"/><path d="M1093 112C1097 118 1103 125 1109 131" stroke="#e8e8e8" stroke-width="0.900" fill="none"/><path d="M1096 118L1118.500 140.500" stroke="#d8d8d8" stroke-width="1" fill="none"/><path d="M1046 100C1050 93 1056 88 1064 85.500M1100 86C1108 89 1114 94 1119 101M1121 110C1123 116 1123 122 1121 127" stroke="#5a5a5a" stroke-width="1.200" fill="none"/></g><path d="M1036.500 111.500L1038.500 113L1044.500 123L1041 123.500C1038 120 1036 116 1036.500 111.500Z" fill="#000"/><path d="M1040 124C1045 124.800 1050 125.500 1055 125.800L1060 126.500L1059 128.500C1052 128 1046 127.500 1041.500 126Z" fill="#000"/><path d="M1033.500 131.500C1036 131 1039.500 131.500 1042 133C1040.500 135.500 1038 137 1035.500 138C1033.500 138.500 1032 138 1031.500 137C1032.500 135 1033 133.500 1033.500 131.500Z" fill="#000"/><path d="M1031 141.500C1034 140.800 1037 141 1039 142C1039.500 144 1038.500 146 1037 147C1034.500 147.300 1032 146.800 1030 145.800C1029 144.500 1029.500 142.800 1031 141.500Z" fill="#000"/><path d="M1046 129.500C1055 128.500 1066 128.500 1076 129.500C1080 131 1083 134 1085 138L1086 146C1085.500 150 1084.500 153 1083 156L1079.500 155C1081.500 151 1082.500 147 1082 143C1081 139 1079 136.500 1076 135L1054 135C1051 136 1049 138.500 1048 141.500L1046.500 150L1043.500 149.500C1043.500 143 1044 136 1046 129.500Z" fill="#000"/><path d="M1054 137.500L1063 140L1069 147.500L1073.500 155L1069 154C1064 150 1058 147 1053 146C1051.500 143 1052 140 1054 137.500Z" fill="#000"/><path d="M1033 152.500L1062 152.500L1063 172.500L1036 172.500C1033.500 166 1032.500 159 1033 152.500Z" fill="#e8e8e8" filter="url(#nz2)"/><path d="M1080 158C1083 160 1086 163.500 1087.500 167C1089 172 1090 178 1091.500 184L1094 196L1096.500 210L1093 210L1090 196C1088 188 1086 180 1084 174C1082.500 169 1080.500 163 1080 158Z" fill="#000"/><path d="M1046 180C1050 181.500 1055 184.500 1059 188.500C1062.500 192.500 1065 197 1066.500 202L1069 213L1064.500 213C1063.500 207 1061.500 201 1058.500 196C1055 191 1050.500 186.500 1046 183Z" fill="#000"/><path d="M1066 186C1070 189 1073.500 193 1076 198L1080 208L1083.500 219L1079 219.500L1075.500 209C1073.500 203.500 1071 198.500 1068 194.500C1066.500 192 1065.500 189 1066 186Z" fill="#000"/><path d="M1064 214L1081.500 213.500L1084.500 222L1087 232L1097 246.500L1101.500 256L1088 256.500C1084 250 1078.500 243 1075 237C1071 230 1067 222 1064 214Z" fill="#000"/><path d="M1059.500 236L1064 238L1061 246L1056.500 256L1053.500 264L1050 264C1052 255 1055.500 245 1059.500 236Z" fill="#000"/><path d="M1067 240L1071.500 243L1069 252L1066.500 262L1063 262C1063.500 254 1065 247 1067 240Z" fill="#000"/><path d="M1076 246L1081 250L1081 260L1079 267L1074.500 267L1075 256Z" fill="#000"/><path d="M1104 150C1109 147.500 1115 144.500 1119.500 141L1126 150C1124 157 1123 164 1123.300 171C1123.500 178 1124.500 184 1126 189.500L1137 200.500L1141 211C1145 222 1147 234 1147.500 246L1148.500 267.500L1138 267.500L1136.500 252C1134.500 240 1131 229 1127 220L1120 207L1113 193C1109 184 1106 174 1104.500 165C1103.500 160 1103.500 155 1104 150Z" fill="#000"/><path d="M1113.500 153C1116 160 1117 168 1117.500 176C1118 186 1119.500 196 1122.500 205L1120 206C1116.500 197 1114.500 187 1113.500 177C1113 169 1112.500 161 1111.500 155Z" fill="#9a9a9a" filter="url(#bl)"/><path d="M1143.500 221C1146 232 1147 246 1147.500 267" stroke="#c8c8c8" stroke-width="1" fill="none"/><path d="M1151.500 222L1152.500 267" stroke="#b8b8b8" stroke-width="0.800" fill="none"/><ellipse cx="1111.0" cy="216.0" rx="5.200" ry="1.700" transform="rotate(25 1111.0 216.0)" fill="#000"/><ellipse cx="1115.0" cy="226.0" rx="5.200" ry="1.700" transform="rotate(25 1115.0 226.0)" fill="#000"/><ellipse cx="1119.0" cy="236.5" rx="5.200" ry="1.700" transform="rotate(22 1119.0 236.5)" fill="#000"/><ellipse cx="1122.5" cy="247.0" rx="5.200" ry="1.700" transform="rotate(20 1122.5 247.0)" fill="#000"/><ellipse cx="1126.0" cy="257.5" rx="5.200" ry="1.700" transform="rotate(18 1126.0 257.5)" fill="#000"/><ellipse cx="1109.0" cy="205.0" rx="5.200" ry="1.700" transform="rotate(30 1109.0 205.0)" fill="#000"/><path d="M1104 168L1106.500 176L1110 190L1116 206L1112 207L1106 192L1102.500 178L1101 169Z" fill="#000"/><path d="M1090 165L1095 182L1101.500 206L1110 232L1121 268L1118 268L1107 233L1098.500 207L1092 183L1088.500 168Z" fill="#4a4a4a"/><circle cx="1097.600" cy="174.300" r="1.300" fill="#000"/></g><path d="M1154.800 70H1158.200V196C1158.200 204 1158 208 1157.500 208C1156 207 1155 206 1154.800 205Z" fill="#f4d4da"/><rect x="1153.300" y="87.5" width="6.500" height="2.300" fill="#000"/><rect x="1153.300" y="142.500" width="6.500" height="2.300" fill="#000"/><rect x="1153.300" y="191.0" width="6.500" height="2.300" fill="#000"/><path d="M1156.500 72V85" stroke="#c08088" stroke-width="0.700"/><g clip-path="url(#hc2)"><path d="M1087 71.400C1096 71.500 1101 72.500 1105.800 73.700C1112 76 1117 78.500 1121 81.500C1127 86 1130 90 1132 95.400C1136 103 1137.500 109 1137.500 115.500C1137.800 123 1137 129 1135 135.500C1133 142 1130 147 1127.500 152.500C1125 158 1124 165 1124 172C1124.300 177 1125.500 183 1128.800 190.700C1132 195 1135.500 196.500 1138.200 198.800C1140.500 201 1141.500 204 1142.200 206.800L1143.500 212.200L1150.200 212.900C1153 212.500 1154.500 211.500 1155.600 210.200C1157.500 209 1157.500 208 1157 207.500C1155.500 207 1154.300 206.500 1153.600 205.500L1152.600 193.400L1152 68.500L1160.700 68.500L1160.700 213.500C1159 216 1157.200 218 1157 220.200C1157.500 223 1161 224.500 1161 227C1161 229.500 1157.500 231 1157.500 233C1157.500 235.500 1161 237.500 1161 240C1161 242.500 1158 244 1158 246C1158 248.500 1161 250 1161 252L1160 262L1161 269.200L1045.200 269.200L1045.200 268C1046 262 1047.500 257 1049.400 252.500C1052 246 1055.500 240 1058 234C1060.500 228 1061.800 223 1061.800 218.500C1061.800 213 1060 208.500 1058 204.600C1054.500 198.500 1050 193.500 1045.500 189.200C1040 184.500 1035 181 1031.600 177.600C1029.500 175.500 1028 173.500 1027.200 172.400C1025.500 171 1023.600 170 1023.600 168.800C1023.800 167 1026.500 165.500 1027.600 163.400C1027.600 161.500 1026.300 160 1026.300 158C1026.300 155 1027.200 152 1026.700 149.800C1025 148.500 1022.500 147.500 1020.800 146.200C1018.800 144.800 1017.800 143 1018.100 141.700C1018.800 140 1020.500 138.500 1021.800 137.200C1024.500 134.500 1027.500 132 1029.400 129C1030.500 126 1030.800 123 1030.600 120C1030 117.500 1030 117.500 1030 117C1030.500 108 1033.500 99.500 1037.800 92.300C1041.500 86.500 1046.500 81.500 1053 77.600C1059 74.500 1065 72.800 1071.800 71.900C1077 71.400 1082 71.300 1087 71.400Z" fill="none" stroke="#f4b0bc" stroke-width="6.400" stroke-linejoin="round"/><path d="M1087 71.400C1096 71.500 1101 72.500 1105.800 73.700C1112 76 1117 78.500 1121 81.500C1127 86 1130 90 1132 95.400C1136 103 1137.500 109 1137.500 115.500C1137.800 123 1137 129 1135 135.500C1133 142 1130 147 1127.500 152.500C1125 158 1124 165 1124 172C1124.300 177 1125.500 183 1128.800 190.700C1132 195 1135.500 196.500 1138.200 198.800C1140.500 201 1141.500 204 1142.200 206.800L1143.500 212.200L1150.200 212.900C1153 212.500 1154.500 211.500 1155.600 210.200C1157.500 209 1157.500 208 1157 207.500C1155.500 207 1154.300 206.500 1153.600 205.500L1152.600 193.400L1152 68.500L1160.700 68.500L1160.700 213.500C1159 216 1157.200 218 1157 220.200C1157.500 223 1161 224.500 1161 227C1161 229.500 1157.500 231 1157.500 233C1157.500 235.500 1161 237.500 1161 240C1161 242.500 1158 244 1158 246C1158 248.500 1161 250 1161 252L1160 262L1161 269.200L1045.200 269.200L1045.200 268C1046 262 1047.500 257 1049.400 252.500C1052 246 1055.500 240 1058 234C1060.500 228 1061.800 223 1061.800 218.500C1061.800 213 1060 208.500 1058 204.600C1054.500 198.500 1050 193.500 1045.500 189.200C1040 184.500 1035 181 1031.600 177.600C1029.500 175.500 1028 173.500 1027.200 172.400C1025.500 171 1023.600 170 1023.600 168.800C1023.800 167 1026.500 165.500 1027.600 163.400C1027.600 161.500 1026.300 160 1026.300 158C1026.300 155 1027.200 152 1026.700 149.800C1025 148.500 1022.500 147.500 1020.800 146.200C1018.800 144.800 1017.800 143 1018.100 141.700C1018.800 140 1020.500 138.500 1021.800 137.200C1024.500 134.500 1027.500 132 1029.400 129C1030.500 126 1030.800 123 1030.600 120C1030 117.500 1030 117.500 1030 117C1030.500 108 1033.500 99.500 1037.800 92.300C1041.500 86.500 1046.500 81.500 1053 77.600C1059 74.500 1065 72.800 1071.800 71.900C1077 71.400 1082 71.300 1087 71.400Z" fill="none" stroke="#000" stroke-width="4.200" stroke-linejoin="round"/></g><path d="M1087 71.400C1096 71.500 1101 72.500 1105.800 73.700C1112 76 1117 78.500 1121 81.500C1127 86 1130 90 1132 95.400C1136 103 1137.500 109 1137.500 115.500C1137.800 123 1137 129 1135 135.500C1133 142 1130 147 1127.500 152.500C1125 158 1124 165 1124 172C1124.300 177 1125.500 183 1128.800 190.700C1132 195 1135.500 196.500 1138.200 198.800C1140.500 201 1141.500 204 1142.200 206.800L1143.500 212.200L1150.200 212.900C1153 212.500 1154.500 211.500 1155.600 210.200C1157.500 209 1157.500 208 1157 207.500C1155.500 207 1154.300 206.500 1153.600 205.500L1152.600 193.400L1152 68.500L1160.700 68.500L1160.700 213.500C1159 216 1157.200 218 1157 220.200C1157.500 223 1161 224.500 1161 227C1161 229.500 1157.500 231 1157.500 233C1157.500 235.500 1161 237.500 1161 240C1161 242.500 1158 244 1158 246C1158 248.500 1161 250 1161 252L1160 262L1161 269.200L1045.200 269.200L1045.200 268C1046 262 1047.500 257 1049.400 252.500C1052 246 1055.500 240 1058 234C1060.500 228 1061.800 223 1061.800 218.500C1061.800 213 1060 208.500 1058 204.600C1054.500 198.500 1050 193.500 1045.500 189.200C1040 184.500 1035 181 1031.600 177.600C1029.500 175.500 1028 173.500 1027.200 172.400C1025.500 171 1023.600 170 1023.600 168.800C1023.800 167 1026.500 165.500 1027.600 163.400C1027.600 161.500 1026.300 160 1026.300 158C1026.300 155 1027.200 152 1026.700 149.800C1025 148.500 1022.500 147.500 1020.800 146.200C1018.800 144.800 1017.800 143 1018.100 141.700C1018.800 140 1020.500 138.500 1021.800 137.200C1024.500 134.500 1027.500 132 1029.400 129C1030.500 126 1030.800 123 1030.600 120C1030 117.500 1030 117.500 1030 117C1030.500 108 1033.500 99.500 1037.800 92.300C1041.500 86.500 1046.500 81.500 1053 77.600C1059 74.500 1065 72.800 1071.800 71.900C1077 71.400 1082 71.300 1087 71.400Z" fill="none" stroke="#f2f200" stroke-width="1.625" stroke-linejoin="round"/><circle cx="1151" cy="219.600" r="1.400" fill="none" stroke="#f2f200" stroke-width="1.250"/><ellipse cx="1155.300" cy="215.500" rx="2" ry="1" fill="#f4b0bc"/><path d="M1154 70V205M1159 70V212" stroke="#f4b0bc" stroke-width="0.750" fill="none"/><path d="M1040 150V139C1041 132 1046 127 1052 126.500H1079C1087 129 1092.500 137 1093.500 146C1093.500 154 1091 161 1088 167" fill="none" stroke="#f4b0bc" stroke-width="1.125"/><path d="M1046.500 150V141C1047.500 135 1051 131.500 1056 131H1076C1082 132.500 1086.500 138 1087.500 145C1087.500 152 1086 158 1083.500 163" fill="none" stroke="#f4b0bc" stroke-width="1.125"/><path d="M1049.500 147V142C1050.500 137.500 1053 134 1057 133.500H1074C1079 135 1083 139 1084 145C1084 150 1082.500 155 1080.500 159" fill="none" stroke="#f4b0bc" stroke-width="1.000"/><path d="M1043 151V138C1044 132.500 1047 129.500 1051.600 128.600H1077.800C1084.500 131 1088.500 136.500 1089.600 142.600C1090.800 146 1090.800 148.500 1090.500 150.700C1089 156 1087 160.500 1085 165.200L1084.100 176C1083 182 1078 185 1073 184C1068 182.500 1063.500 178.500 1060 174" fill="none" stroke="#f2f200" stroke-width="1.375"/><path d="M1043 151L1051 154L1058 158.500L1063 164.500L1065 172" fill="none" stroke="#f2f200" stroke-width="1.125"/><path d="M1053.400 136.700L1076.900 136.700L1081.400 146.200L1077 152L1073.300 156.200L1066 152.500L1060.600 148.900L1056 143Z" fill="none" stroke="#ff00ff" stroke-width="1.625" stroke-linejoin="round"/><path d="M1055 139L1062 146.500L1069 152L1073 157.500L1076 152L1080 145" fill="none" stroke="#800040" stroke-width="1.375"/><path d="M1057 139.400L1076.900 141.200L1075.500 148L1073.300 154.400L1068 149.500L1063.300 144.400Z" fill="#ff0000"/><path d="M1064.200 141.700L1076 141.700L1074.500 146.500L1072.400 150.700L1068.500 146.500Z" fill="#fff"/><path d="M1078.300 138V123.600H1093.600L1091.800 130.800V139C1092.500 143 1092.700 147 1092.700 151.600" fill="none" stroke="#0a84ff" stroke-width="1.375"/><path d="M1078.500 138C1079 143 1080.500 148 1083 152" fill="none" stroke="#0a84ff" stroke-width="1.250" stroke-dasharray="2 1.500"/><path d="M1030 149.800H1065.500V175H1040" fill="none" stroke="#90ee90" stroke-width="1.500"/><path d="M1031.700 151.200H1063.800V173.300H1042" fill="none" stroke="#a0522d" stroke-width="1.375"/><path d="M1042.500 152.200L1060.600 151.600" stroke="#0000ff" stroke-width="1.400" fill="none"/><path d="M1031.500 152C1029.500 155 1030 158 1031 160C1029.500 163 1030 166 1031.500 168.500C1032 171 1033.500 172.500 1035 173.500M1033 153.500C1032 156 1033 158 1032.500 160" fill="none" stroke="#0000ff" stroke-width="1.375"/><ellipse cx="1040" cy="156" rx="2" ry="0.900" fill="none" stroke="#0000ff" stroke-width="1.250"/><path d="M1036.500 159C1035.500 161.500 1036 164 1037.500 166C1039 165 1038.500 161 1037.800 159Z" fill="none" stroke="#0000ff" stroke-width="1.250"/><path d="M1041.500 168.500L1043.500 170L1044.500 173" fill="none" stroke="#0000ff" stroke-width="1.250"/><circle cx="1063.700" cy="155.200" r="1.300" fill="none" stroke="#0000ff" stroke-width="1.250"/><path d="M1064 159L1068.500 158.500L1067 164L1063.500 167.500L1061.500 167L1063 163Z" fill="none" stroke="#0000ff" stroke-width="1.250"/><path d="M1036 172.500C1039 171 1043 171.500 1044.500 174C1045 178 1042.500 181.500 1039 182C1036 181.500 1034.500 178 1036 172.500Z" fill="none" stroke="#ff00ff" stroke-width="1.375"/><path d="M1069.700 159.800C1072 157.500 1076 157.500 1078 159.500C1078.500 162 1077.500 164.500 1075.500 165H1070.500Z" fill="none" stroke="#ff9a00" stroke-width="1.250"/><path d="M1079 155.500C1082 156.500 1083.500 159 1083.500 162C1083.500 167 1082 171 1079.500 174.500C1076.500 177.500 1072.500 177 1070 174.500C1068 172.500 1067 170 1067.500 167" fill="none" stroke="#ff9a00" stroke-width="1.250"/><path d="M1073 158V176M1077 160V178" stroke="#ff00ff" stroke-width="1.125" fill="none"/><path d="M1078.500 180C1079 186 1080.500 192 1081.500 198" stroke="#ff00ff" stroke-width="1.125" fill="none" stroke-dasharray="3 2"/><path d="M1088 153.500L1089.800 164.500C1091.500 173 1094 182 1096.500 191C1099 200 1102 209 1105 218C1109 230 1114 245 1121.500 269" fill="none" stroke="#ff00ff" stroke-width="1.500"/><path d="M1092.500 166C1094.500 175 1097 184 1100 193.500C1103 203 1106.500 213 1110 222" fill="none" stroke="#ff00ff" stroke-width="1.375" stroke-dasharray="14 2 8 3 6 3 20 0"/><path d="M1110 226C1114 238 1119 252 1125 269" fill="none" stroke="#ff00ff" stroke-width="1.375"/><path d="M1031 177C1036 181 1042 185 1047 189.500C1052 194 1056 199 1059 205C1060.500 209 1061.500 213 1062 216L1075 215.500L1078.500 222.500L1065 224.500L1063 232" fill="none" stroke="#f4b0bc" stroke-width="1.125"/><path d="M1060.500 233H1064C1066 236 1070 239 1075 240.500C1080 241.500 1084 241 1087 239.500C1089 238 1090.500 235 1090 232" fill="none" stroke="#f4b0bc" stroke-width="1.125"/><path d="M1084 180C1086 186 1087.500 192 1088 198C1088.500 204 1088.500 209 1087.500 213" fill="none" stroke="#f4b0bc" stroke-width="1.000"/><path d="M1076.500 186C1075.500 191 1076 196 1077.500 200C1079 203 1080 206 1080 209" fill="none" stroke="#f4b0bc" stroke-width="1.000"/><path d="M1066.500 213.500L1081.500 213.500L1088 228L1096 240L1100 248L1102 256L1089 257.500L1085.500 250L1079 238L1072.500 226Z" fill="none" stroke="#f08078" stroke-width="1.250"/><path d="M1066 226.500C1069 223.500 1075 222.500 1081 224.500L1084 226.500L1081.500 231L1085 234.500C1081 237 1074 236.500 1069 234C1065.500 232 1064.500 229 1066 226.500Z" fill="none" stroke="#f0d000" stroke-width="1.375"/><path d="M1083.500 214L1086 222L1090 229" fill="none" stroke="#7a20e0" stroke-width="1.500" stroke-dasharray="4 2"/><path d="M898 131.700H1268" stroke="#1b8c1b" stroke-width="1.100" stroke-dasharray="3 2.300"/><rect x="899" y="130.200" width="17" height="3" fill="#1a7c1a"/><rect x="1249" y="130.200" width="18" height="3" fill="#1a7c1a"/><path d="M1081.900 68V96" stroke="#2ea02e" stroke-width="3.000" opacity="0.850"/><path d="M1081.900 96V272" stroke="#1e8a1e" stroke-width="1.200" stroke-dasharray="2 3.300" opacity="0.850"/><path d="M1081.900 247V271" stroke="#3cc83c" stroke-width="2.800" opacity="0.900"/><text x="1079.800" y="81" font-family="Liberation Sans,sans-serif" font-size="7.500" fill="#38d038">S</text><path d="M1231.400 68.500V271" stroke="#6a6a6a" stroke-width="1.250"/><path d="M1197.500 195V271" stroke="#3a3a3a" stroke-width="1.000"/><g filter="url(#bl)"><ellipse cx="932.300" cy="212.700" rx="3.200" ry="2.300" fill="#2a72d8"/><path d="M926.500 214.400L930.500 213.300L930.500 214.600Z" fill="#2a72d8"/><path d="M929.600 214.600H934.500V219.800H931C929.800 218.500 929.300 216.500 929.600 214.600Z" fill="#c08a50"/><path d="M930 221C932 219.800 936 219.800 938 221.300L938.200 238.200L930 238.600C929.400 232 929.400 226 930 221Z" fill="#1fa8a0"/><path d="M933.800 224.500L936.200 224L936.300 239.500L934 241.500L933.200 239L933.600 232Z" fill="#c08040"/><path d="M930.500 238.300L938.200 238L937.800 263.200L932.600 263.200L932 250Z" fill="#3a60c8"/><path d="M929 261.200H933.200V262.800H929ZM929 263.600H938V265.300H929Z" fill="#dcdcdc"/></g>
</svg>
<div class="gt" style="left:3.5px;top:3.55px;">CT1</div><div class="gt" style="left:3.5px;top:14.67px;"><span class="cj" style="width:18.60px;color:#20b420;position:relative;top:1.2px">层号</span>: 256.0/512</div><div class="gt" style="left:3.5px;top:25.79px;"><span class="cj" style="width:27.90px;color:#20b420;position:relative;top:1.2px">层坐标</span>: 268.4mm</div>
<div class="gt r" style="left:244.5px;top:3.55px;width:120px;text-align:right;">W: 80</div><div class="gt r" style="left:244.5px;top:14.67px;width:120px;text-align:right;">L: 40</div>
<div class="gt" style="left:358.0px;top:98.15px;">P</div>
</div>
<div class="abs" style="left:898px;top:272px;width:370px;height:2px;background:#9a9a9a"></div>
<div class="view" id="v3" style="left:898px;top:274px;width:370px;height:205px">
<svg class="abs" style="left:0;top:0" width="370" height="205" viewBox="898 274 370 205">
<defs><clipPath id="hc3"><path d="M1082 278.500L1095.400 278.500C1100 279.500 1104.500 283 1108.800 287.400C1114 292.500 1118.500 297.500 1122.200 303.700C1125.500 309.500 1127.500 315.500 1128 321.600C1128.500 328 1128.500 335 1128.900 341C1129.500 346 1131 351 1131.100 355.300C1131 362 1129 368.500 1126.700 374.700C1124 381 1120.500 386.500 1117.700 392.500C1115.500 397.500 1115.500 403 1116 407C1116.500 410 1117 411.500 1117.300 412.800C1122 415.500 1127 417.500 1132.500 419.200L1134.800 421.600L1171 424.500C1174.500 425.500 1177 427 1179.100 429.200C1180.300 431 1180.900 433 1180.900 435L1178 460.600L1176.800 473.500C1176 475.500 1175 476.500 1173.300 476.700L994.600 476.700C993.300 476 992.500 475 992.200 473.500L990.500 458.300L988.700 435C988.800 432.500 989.200 430.500 989.900 429.200C992 426.500 994.500 425.200 997.500 424.500L1030.100 420.400L1038.300 419.200C1043.500 417.500 1048.500 415.500 1052.900 412.800C1053.800 409 1054.200 404.500 1053.500 400C1052.800 396 1052.500 396 1052.300 395.500C1050.500 390.500 1048.300 385.500 1046.400 380.600C1044.500 375.500 1043 370.500 1041.900 365.700C1041 362.500 1040.500 360 1040.400 357.300C1040.300 352 1041 346.500 1041.200 341C1041.200 334.500 1040.300 328 1040.400 321.600C1041.500 315 1044 309 1047.800 303.700C1051 298.500 1055 293.500 1059.700 288.900C1063.500 285.500 1067.500 282.500 1071.600 280.700C1075 279.300 1078.500 278.600 1082 278.500Z"/></clipPath></defs><g clip-path="url(#hc3)"><path d="M1040 476V278H1132V420H1180V476Z" fill="#f4f4f4"/><path d="M988 421L1040 418.500L1054 413L1054 448.400L1057 448.400L1116 448.400L1116 412L1132 419L1181 423V477H988Z" fill="#000"/><path d="M997.500 430C1003 428 1012 428.500 1018 430C1022 433 1022.500 437 1021 441C1019.500 447 1017 453 1014 459C1011.500 465 1010.500 470 1011 476L1001 476C1000 468 1002 460 1004 453C1002 450 999.500 447 998 443C996.500 439 996.500 434 997.500 430Z" fill="#8a8a8a" filter="url(#nz3)"/><path d="M1031.500 438L1036.500 439.500L1032 452L1027 464L1024 476L1018.500 476L1021 463L1026 450Z" fill="#8a8a8a" filter="url(#nz3)"/><path d="M1171.500 430C1166 428 1157 428.500 1151 430C1147 433 1146.500 437 1148 441C1149.500 447 1152 453 1155 459C1157.500 465 1158.500 470 1158 476L1168 476C1169 468 1167 460 1165 453C1167 450 1169.500 447 1171 443C1172.500 439 1172.500 434 1171.500 430Z" fill="#8a8a8a" filter="url(#nz3)"/><path d="M1137.500 438L1132.500 439.500L1137 452L1142 464L1145 476L1150.500 476L1148 463L1143 450Z" fill="#8a8a8a" filter="url(#nz3)"/><ellipse cx="1040.600" cy="450" rx="3.500" ry="1.100" transform="rotate(-45 1040.600 450)" fill="#fff"/><ellipse cx="1028.400" cy="464.500" rx="4" ry="1.200" transform="rotate(-62 1028.400 464.500)" fill="#fff"/><ellipse cx="1130.500" cy="451" rx="3.500" ry="1.100" transform="rotate(50 1130.500 451)" fill="#fff"/><ellipse cx="1140.500" cy="465" rx="4" ry="1.200" transform="rotate(65 1140.500 465)" fill="#fff"/><path d="M1031 423.500C1034 425 1035.500 428 1035 431.500M1138 423.500C1135 425 1133.500 428 1134 431.500" stroke="#e8e8e8" stroke-width="1.400" fill="none"/><path d="M1024 432C1029 430 1034 430.500 1038 433.500M1145 432C1140 430 1135 430.500 1131 433.500" stroke="#d0d0d0" stroke-width="0.800" fill="none"/><path d="M1054 413H1116V448.400H1054Z" fill="#111"/><path d="M1059 398H1071.500V420C1071 424 1068.500 425 1066 424C1062.500 421 1060 416 1059 410Z" fill="#fff"/><ellipse cx="1059.500" cy="430" rx="5" ry="1.800" transform="rotate(32 1059.500 430)" fill="#fff"/><path d="M1097.500 398H1107V420C1106.500 425 1104 428 1101 431C1097 436 1093 444 1090.500 452L1088 462L1084.500 462L1087 450C1089.500 442 1093 434 1096 428C1097 424 1097.500 420 1097.500 416Z" fill="#fff"/><path d="M1108 430C1113 428 1118 427.500 1122 429L1121 433C1117 432 1112 432.500 1108.500 434Z" fill="#e8e8e8"/><path d="M1066 449L1071 449L1075 462L1078 476L1072 476L1069.500 463Z" fill="#fff"/><path d="M1071.500 452L1075 451L1079.500 462L1077 465Z" fill="#ddd"/><path d="M1083.500 463C1087 461.500 1093 461.500 1097 464C1099.500 467 1099.500 471 1097.500 474.600L1084 476Z" fill="#fff"/><path d="M1073 398H1094V446H1073Z" fill="#ddd"/><path d="M1080 400C1084 399 1087 400 1088.500 402V436C1087 440 1084 441 1081.500 439C1080 428 1080 412 1080 400Z" fill="#9a9a9a"/><path d="M1041 346L1046 344.500L1048.500 352L1048 362L1045.500 372L1042.500 364Z" fill="#000"/><path d="M1129.500 346L1124.500 344.500L1122 352L1122.500 362L1125 372L1128 364Z" fill="#000"/><path d="M1042 376L1047 378L1052 392L1053.500 400L1053.500 414L1040 419V376Z" fill="#000"/><path d="M1128.500 376L1123.500 378L1118.500 392L1116.500 400L1116.500 414L1132 419V376Z" fill="#000"/><path d="M1043.500 351C1046.500 349.500 1050 350.500 1051 353.500C1051.500 358 1050.500 363 1049 367C1047.500 370 1045.500 371.500 1044 370C1042.500 364 1042.500 357 1043.500 351Z" fill="#8a8a8a" filter="url(#nz3)"/><path d="M1126.500 351C1123.500 349.500 1120 350.500 1119 353.500C1118.500 358 1119.500 363 1121 367C1122.500 370 1124.500 371.500 1126 370C1127.500 364 1127.500 357 1126.500 351Z" fill="#8a8a8a" filter="url(#nz3)"/><path d="M1049.300 338C1048 330 1047.500 322 1049 314C1051 306 1055 299.500 1060.500 294C1066.500 289 1074 286.800 1082 286.600L1095 286.600C1101 287.500 1106.500 290.500 1111 295C1116 300.500 1119.500 307 1120.700 314C1121.800 322 1121.500 330 1120.700 338C1114 339.500 1106 339 1099 338.500L1085 340.500L1071 338.500C1064 339 1056 339.500 1049.300 338Z" fill="#767676" filter="url(#nz)"/><g filter="url(#bl)"><path d="M1075.500 308.500C1078.500 310.500 1082 311 1084.500 309.500C1087 311 1090.500 310.500 1093.500 308.500C1092.500 312 1089 314.500 1085.500 313.500L1084.500 312.800L1083.500 313.500C1080 314.500 1076.500 312 1075.500 308.500Z" fill="#222"/><path d="M1084 318L1085.500 318L1086 324L1084.700 326L1083.500 324Z" fill="#2a2a2a"/><path d="M1084.500 288V306" stroke="#555" stroke-width="1"/><path d="M1052 318C1053 308 1058 299 1066 293M1117 318C1116 308 1111 299 1103 293" stroke="#5a5a5a" stroke-width="1.200" fill="none"/></g><path d="M1055 342L1068 341.500L1072 346L1066 349L1058 348Z" fill="#222"/><path d="M1100 342L1113 341.500L1116 346L1110 349L1102 347Z" fill="#222"/><path d="M1059 356L1066 354L1068 362L1064 372L1060 368Z" fill="#111"/><path d="M1101 358L1108 356L1111 364L1106 372L1102 368Z" fill="#333"/><path d="M1060 378L1068 376.500L1070 384L1066 395L1061 390Z" fill="#000"/><path d="M1098 380L1108 378L1110 386L1104 395L1099 390Z" fill="#555"/><path d="M1074 386L1080 384L1082 396L1076 398Z" fill="#888"/></g><defs><clipPath id="hc3b"><rect x="1030" y="274" width="110" height="139"/></clipPath></defs><g clip-path="url(#hc3b)"><g clip-path="url(#hc3)"><path d="M1082 278.500L1095.400 278.500C1100 279.500 1104.500 283 1108.800 287.400C1114 292.500 1118.500 297.500 1122.200 303.700C1125.500 309.500 1127.500 315.500 1128 321.600C1128.500 328 1128.500 335 1128.900 341C1129.500 346 1131 351 1131.100 355.300C1131 362 1129 368.500 1126.700 374.700C1124 381 1120.500 386.500 1117.700 392.500C1115.500 397.500 1115.500 403 1116 407C1116.500 410 1117 411.500 1117.300 412.800C1122 415.500 1127 417.500 1132.500 419.200L1134.800 421.600L1171 424.500C1174.500 425.500 1177 427 1179.100 429.200C1180.300 431 1180.900 433 1180.900 435L1178 460.600L1176.800 473.500C1176 475.500 1175 476.500 1173.300 476.700L994.600 476.700C993.300 476 992.500 475 992.200 473.500L990.500 458.300L988.700 435C988.800 432.500 989.200 430.500 989.900 429.200C992 426.500 994.500 425.200 997.500 424.500L1030.100 420.400L1038.300 419.200C1043.500 417.500 1048.500 415.500 1052.900 412.800C1053.800 409 1054.200 404.500 1053.500 400C1052.800 396 1052.500 396 1052.300 395.500C1050.500 390.500 1048.300 385.500 1046.400 380.600C1044.500 375.500 1043 370.500 1041.900 365.700C1041 362.500 1040.500 360 1040.400 357.300C1040.300 352 1041 346.500 1041.200 341C1041.200 334.500 1040.300 328 1040.400 321.600C1041.500 315 1044 309 1047.800 303.700C1051 298.500 1055 293.500 1059.700 288.900C1063.500 285.500 1067.500 282.500 1071.600 280.700C1075 279.300 1078.500 278.600 1082 278.500Z" fill="none" stroke="#f4b0bc" stroke-width="6.400" stroke-linejoin="round"/><path d="M1082 278.500L1095.400 278.500C1100 279.500 1104.500 283 1108.800 287.400C1114 292.500 1118.500 297.500 1122.200 303.700C1125.500 309.500 1127.500 315.500 1128 321.600C1128.500 328 1128.500 335 1128.900 341C1129.500 346 1131 351 1131.100 355.300C1131 362 1129 368.500 1126.700 374.700C1124 381 1120.500 386.500 1117.700 392.500C1115.500 397.500 1115.500 403 1116 407C1116.500 410 1117 411.500 1117.300 412.800C1122 415.500 1127 417.500 1132.500 419.200L1134.800 421.600L1171 424.500C1174.500 425.500 1177 427 1179.100 429.200C1180.300 431 1180.900 433 1180.900 435L1178 460.600L1176.800 473.500C1176 475.500 1175 476.500 1173.300 476.700L994.600 476.700C993.300 476 992.500 475 992.200 473.500L990.500 458.300L988.700 435C988.800 432.500 989.200 430.500 989.900 429.200C992 426.500 994.500 425.200 997.500 424.500L1030.100 420.400L1038.300 419.200C1043.500 417.500 1048.500 415.500 1052.900 412.800C1053.800 409 1054.200 404.500 1053.500 400C1052.800 396 1052.500 396 1052.300 395.500C1050.500 390.500 1048.300 385.500 1046.400 380.600C1044.500 375.500 1043 370.500 1041.900 365.700C1041 362.500 1040.500 360 1040.400 357.300C1040.300 352 1041 346.500 1041.200 341C1041.200 334.500 1040.300 328 1040.400 321.600C1041.500 315 1044 309 1047.800 303.700C1051 298.500 1055 293.500 1059.700 288.900C1063.500 285.500 1067.500 282.500 1071.600 280.700C1075 279.300 1078.500 278.600 1082 278.500Z" fill="none" stroke="#000" stroke-width="4.200" stroke-linejoin="round"/></g></g><path d="M1057 448.400L1048 444L1040 436L1036 428L1030.100 423.900L996.900 432C994.500 434 994 436 994.200 439L996 465L997.500 473.700H1171L1173.900 465.300L1173.300 435C1172.500 432 1170 429.500 1166.300 428.600L1138.300 424.500L1133 429L1128 437L1120 444L1113 448.400Z" fill="none" stroke="#f4b0bc" stroke-width="1.125"/><path d="M1045 343L1052 346L1062 343L1072 341L1078 344L1084.500 346L1091 344L1098 341L1108 343L1117 346L1124 343" fill="none" stroke="#f4b0bc" stroke-width="1.125"/><path d="M1062 354H1076V360H1062ZM1066 349H1078L1080 353H1064Z" fill="none" stroke="#f4b0bc" stroke-width="1.000"/><path d="M1082 278.500L1095.400 278.500C1100 279.500 1104.500 283 1108.800 287.400C1114 292.500 1118.500 297.500 1122.200 303.700C1125.500 309.500 1127.500 315.500 1128 321.600C1128.500 328 1128.500 335 1128.900 341C1129.500 346 1131 351 1131.100 355.300C1131 362 1129 368.500 1126.700 374.700C1124 381 1120.500 386.500 1117.700 392.500C1115.500 397.500 1115.500 403 1116 407C1116.500 410 1117 411.500 1117.300 412.800C1122 415.500 1127 417.500 1132.500 419.200L1134.800 421.600L1171 424.500C1174.500 425.500 1177 427 1179.100 429.200C1180.300 431 1180.900 433 1180.900 435L1178 460.600L1176.800 473.500C1176 475.500 1175 476.500 1173.300 476.700L994.600 476.700C993.300 476 992.500 475 992.200 473.500L990.500 458.300L988.700 435C988.800 432.500 989.200 430.500 989.900 429.200C992 426.500 994.500 425.200 997.500 424.500L1030.100 420.400L1038.300 419.200C1043.500 417.500 1048.500 415.500 1052.900 412.800C1053.800 409 1054.200 404.500 1053.500 400C1052.800 396 1052.500 396 1052.300 395.500C1050.500 390.500 1048.300 385.500 1046.400 380.600C1044.500 375.500 1043 370.500 1041.900 365.700C1041 362.500 1040.500 360 1040.400 357.300C1040.300 352 1041 346.500 1041.200 341C1041.200 334.500 1040.300 328 1040.400 321.600C1041.500 315 1044 309 1047.800 303.700C1051 298.500 1055 293.500 1059.700 288.900C1063.500 285.500 1067.500 282.500 1071.600 280.700C1075 279.300 1078.500 278.600 1082 278.500Z" fill="none" stroke="#f2f200" stroke-width="1.625" stroke-linejoin="round"/><path d="M1050 313.900L1064.200 314.900L1064.200 324.600L1061.200 328.300L1066.400 330.500L1067.200 336.500L1058 338.500L1049.300 339.400L1048.600 326Z" fill="none" stroke="#ff00ff" stroke-width="1.500" stroke-linejoin="round"/><path d="M1106.600 314.900L1119.200 313.900L1120 333.500L1117.700 338L1108 337L1099.900 335.700L1102.900 332L1106 329L1107.300 326Z" fill="none" stroke="#ff00ff" stroke-width="1.500" stroke-linejoin="round"/><path d="M1074.600 330.200H1095.400L1093.200 335.700H1076.100Z" fill="none" stroke="#0a84ff" stroke-width="1.375"/><path d="M1076 340.500L1079 345L1083 348M1093 340.500L1090 345L1086 348" fill="none" stroke="#0a70e0" stroke-width="1.250"/><path d="M1069.400 337.200H1095.400" stroke="#d8d800" stroke-width="2.000"/><path d="M1066 333L1072 336M1098 336L1104 333" stroke="#f2f200" stroke-width="1.125"/><path d="M1094 333.500L1098 330.500L1104.300 327.500" stroke="#208020" stroke-width="1.250" fill="none"/><path d="M1051 344L1058 345L1063 348L1060 350L1054 348Z" fill="none" stroke="#00e8e8" stroke-width="1.250"/><path d="M1061 343.500C1064 342.500 1068 343 1070 345C1068 347.500 1064 347.500 1061 346Z" fill="none" stroke="#80e020" stroke-width="1.250"/><path d="M1100 342H1108L1110 346H1101ZM1110 339L1119 338L1121 342L1112 345ZM1106 349L1113 348L1112 353L1105 354Z" fill="none" stroke="#ff9a00" stroke-width="1.250"/><path d="M1086 352L1093 346.500L1102 346L1105.500 350L1104 358L1094 360L1090 356Z" fill="none" stroke="#ff00ff" stroke-width="1.375"/><path d="M1092 350.500C1095 349 1099 349.500 1100 352C1100.500 355 1098 357 1095.500 356.500C1093.500 355.500 1092.500 353 1092 350.500Z" fill="none" stroke="#800040" stroke-width="1.375"/><path d="M1090 368L1093 364L1104 363.500L1107 367L1106 380L1098 384L1092 381Z" fill="none" stroke="#ff00ff" stroke-width="1.375"/><path d="M1093 377C1094 374 1097 372.500 1099.500 374C1102 376 1102.500 380 1100 382.500C1097 383 1094 381 1093 377Z" fill="none" stroke="#800040" stroke-width="1.375"/><path d="M1095.500 380H1100.500" stroke="#00d000" stroke-width="1.500"/><path d="M1090 364L1096 362L1108 362.500" fill="none" stroke="#0000ff" stroke-width="1.375"/><path d="M1089 366C1087.500 372 1088.500 380 1091 385L1095 389" fill="none" stroke="#0000ff" stroke-width="1.250"/><path d="M1116 352C1120 350 1124 351 1125 355C1125 360 1123 366 1120 370" fill="none" stroke="#60e8e8" stroke-width="1.250"/><path d="M1044 356C1044.500 352 1048 350.500 1051 351" fill="none" stroke="#0a84ff" stroke-width="1.250"/><path d="M1060 366V376" stroke="#0a84ff" stroke-width="1.500"/><circle cx="1062.500" cy="383.500" r="1.600" fill="none" stroke="#0000ff" stroke-width="1.250"/><path d="M1061 392.500L1066.500 391L1068 396L1062.500 397.500Z" fill="none" stroke="#0000ff" stroke-width="1.375"/><path d="M1058 380L1060 378M1069 379L1070 382" stroke="#0000ff" stroke-width="1.250"/><path d="M1058 366H1072V376H1058ZM1073 360.500C1077 359 1086 359 1089.500 361C1088 364.500 1077 365 1073 363Z" fill="none" stroke="#ff9a00" stroke-width="1.250"/><path d="M1055 358C1053.500 368 1054 378 1056 388C1058 396 1059 404 1058.500 411C1057 417 1050 420.500 1042 422.500C1038.500 424 1037.500 426 1039 429C1043 436 1050 441 1058 443.500L1076 444.500V440" fill="none" stroke="#ff9a00" stroke-width="1.250"/><path d="M1052.500 381C1051.500 386 1053 391 1055 396C1057 402 1057 408 1055.500 413C1052 417 1046 419 1041 420.500" fill="none" stroke="#ff9a00" stroke-width="1.250"/><path d="M1058.500 372C1057 380 1058 388 1060.500 395C1062.500 402 1063 409 1062 415C1059 420 1052 423.500 1046 425.500C1044 427 1044 428.500 1045.500 430.500C1049.500 435 1055 438 1062 439.500L1073 440" fill="none" stroke="#ff9a00" stroke-width="1.250"/><path d="M1113 358C1114.500 368 1114 378 1112 388C1110 396 1109 404 1109.500 411C1111 417 1118 420.500 1126 422.500C1129.500 424 1130.500 426 1129 429C1125 436 1118 441 1110 443.500L1092 444.500V440" fill="none" stroke="#ff9a00" stroke-width="1.250"/><path d="M1115.500 381C1116.500 386 1115 391 1113 396C1111 402 1111 408 1112.500 413C1116 417 1122 419 1127 420.500" fill="none" stroke="#ff9a00" stroke-width="1.250"/><path d="M1109.500 372C1111 380 1110 388 1107.500 395C1105.500 402 1105 409 1106 415C1109 420 1116 423.500 1122 425.500C1124 427 1124 428.500 1122.500 430.500C1118.500 435 1113 438 1106 439.500L1095 440" fill="none" stroke="#ff9a00" stroke-width="1.250"/><path d="M1074 372C1072.500 382 1073.500 392 1075 402C1076.500 412 1077 422 1076.500 432L1077 446M1095 372C1096.500 382 1095.500 392 1094 402C1092.500 412 1092 422 1092.500 432L1092 446" fill="none" stroke="#ff9a00" stroke-width="1.250"/><path d="M1070 384C1069 394 1070 404 1072 414C1073 422 1072.500 430 1071.500 436M1099 384C1100 394 1099 404 1097 414C1096 422 1096.500 430 1097.500 436" fill="none" stroke="#ff9a00" stroke-width="1.125"/><path d="M1079 373C1078 385 1080 397 1081.500 409C1082.500 420 1081.500 432 1082.500 446M1088 373C1089.500 385 1088 397 1087 409C1086 420 1087 432 1086 446" fill="none" stroke="#f2f200" stroke-width="1.375"/><path d="M1082 370V392" stroke="#e8e000" stroke-width="1.600"/><path d="M1057 446.600C1049 443.500 1042 438 1038.500 431C1037 427.500 1038 424.500 1041 423L1051 419.500C1054.500 418 1056.500 415.500 1057 412" fill="none" stroke="#f2f200" stroke-width="1.375"/><path d="M1113 446.600C1121 443.500 1128 438 1131.500 431C1133 427.500 1132 424.500 1129 423L1119 419.500C1115.500 418 1113.500 415.500 1113 412" fill="none" stroke="#f2f200" stroke-width="1.375"/><path d="M1057 446.600H1080L1082.500 440L1085 446.600H1113" fill="none" stroke="#f2f200" stroke-width="1.375"/><path d="M1040 419.500L1050 415.500M1130 419.500L1120 415.500" stroke="#20d020" stroke-width="1.500"/><path d="M1082 402C1080.500 410 1081 418 1083 424C1084.500 426.500 1086.500 426 1087.500 423C1088.500 416 1088 408 1086.500 402" fill="none" stroke="#f4b0bc" stroke-width="1.125"/><path d="M1081 400H1088M1082 404H1087" stroke="#ff00ff" stroke-width="1.375" stroke-dasharray="1.500 1"/><path d="M1084 408V420" stroke="#8020e0" stroke-width="1.500" stroke-dasharray="2 1.500"/><path d="M898 338.400H1268" stroke="#1b8c1b" stroke-width="1.100" stroke-dasharray="3 2.300"/><rect x="899" y="336.900" width="5" height="3" fill="#1a7c1a"/><rect x="1249" y="336.900" width="18" height="3" fill="#1a7c1a"/><path d="M1082 275V300" stroke="#2ea02e" stroke-width="2.600" opacity="0.850"/><path d="M1082 300V478" stroke="#1e8a1e" stroke-width="1.200" stroke-dasharray="2 3.300" opacity="0.850"/><path d="M1082 459.500V478" stroke="#44cc44" stroke-width="2.800" opacity="0.900"/><text x="1079.800" y="287" font-family="Liberation Sans,sans-serif" font-size="7.500" fill="#38d038">S</text><g transform="translate(931.7 417.7) scale(1.000)" filter="url(#bl)"><ellipse cx="0" cy="4.800" rx="2.300" ry="3.600" fill="#c08a50"/><path d="M-2.400 3.600C-2.300 -1 2.300 -1 2.400 3.600Z" fill="#2a6fd8"/><rect x="-1.100" y="7.800" width="2.200" height="2.400" fill="#b07a44"/><path d="M-7.600 16.300L-5.700 17.200L-14.500 30.600L-15.900 29.600ZM7.600 16.300L5.700 17.200L14.500 30.600L15.900 29.600Z" fill="#c48a48"/><path d="M-3 9.600L3 9.600L9 11.800L7.700 17.800L4.600 16.200L4.400 28.400L-4.700 28.400L-4.600 16.200L-7.700 17.800L-9 11.800Z" fill="#20b0a8"/><path d="M-4.700 28L4.400 28L6.600 51.600L3.600 51.600L.3 33L-.3 33L-2.300 51.600L-5.900 51.600Z" fill="#3a60c8"/><path d="M-7.400 51.800h4.200v1.800h-4.200zM4.300 51.800h3.800v1.800h-3.800z" fill="#e4e4e4"/></g>
</svg>
<div class="gt" style="left:3.5px;top:3.85px;">CT1</div><div class="gt" style="left:3.5px;top:14.97px;"><span class="cj" style="width:18.60px;color:#20b420;position:relative;top:1.2px">层号</span>: 256.0/512</div><div class="gt" style="left:3.5px;top:26.09px;"><span class="cj" style="width:27.90px;color:#20b420;position:relative;top:1.2px">层坐标</span>: 268.4mm</div>
<div class="gt r" style="left:244.5px;top:3.85px;width:120px;text-align:right;">W: 80</div><div class="gt r" style="left:244.5px;top:14.97px;width:120px;text-align:right;">L: 40</div>
<div class="gt" style="left:360.0px;top:95.15px;">L</div>
</div>
<div class="abs" style="left:898px;top:479px;width:370px;height:1px;background:#a8a8a8"></div>
<div class="view" id="v4" style="left:898px;top:480px;width:370px;height:206px">
<svg class="abs" style="left:0;top:0" width="370" height="206" viewBox="898 480 370 206">
<defs><filter id="b4"><feGaussianBlur stdDeviation="0.5"/></filter></defs><g filter="url(#b4)"><rect x="1057.400" y="542.800" width="50.200" height="49.500" fill="#e8c8a0" stroke="#c8e820" stroke-width="1.800"/><path d="M1023.800 597.200H1140.800V621H1132V613.500H1023.800Z" fill="#e8c8a0" stroke="#c8e820" stroke-width="1.800"/><rect x="1027" y="600" width="10" height="11" fill="#c8e820"/><ellipse cx="1082.500" cy="622" rx="50.500" ry="5.500" fill="#c8e820"/><path d="M1033 623C1033.500 614 1037 604 1043.300 598.600C1050 595.500 1058 593.500 1064.500 591.500L1066 585H1099L1099.800 591.500C1107 593.500 1115 595.500 1122.400 598.600C1128.500 604 1132 614 1132.300 623C1116 626 1049 626 1033 623Z" fill="#f8c2b6"/><path d="M1046 612C1060 608.500 1105 608.500 1119 612L1124 622C1110 625 1055 625 1041 622Z" fill="#e8c8a0" opacity="0.850"/><ellipse cx="1082.700" cy="561" rx="17" ry="20.300" fill="#f8c2b6"/><path d="M1066 570H1099.500V592H1066Z" fill="#f8c2b6"/><rect x="1057.4" y="551.5" width="7.400" height="1.500" fill="#000"/><rect x="1057.4" y="589.3" width="7.400" height="1.500" fill="#000"/><rect x="1100.500" y="551.5" width="7.400" height="1.500" fill="#000"/><rect x="1100.500" y="589.3" width="7.400" height="1.500" fill="#000"/><rect x="1133" y="614.500" width="8.200" height="2.200" fill="#000"/><path d="M1067 568.500H1072V583.500H1068C1066.500 579 1066.300 573 1067 568.500ZM1095.500 568.500H1100.500C1101.300 573 1101.300 579 1100 583.500H1095.500Z" fill="#68ccf0"/><path d="M1077.500 563.500H1089V574L1083.200 580Z" fill="#3c8ce0"/><path d="M1068.400 556.500L1076.800 556.200L1078 566.500L1070 568.200Z" fill="#927068"/><circle cx="1075" cy="564" r="1.100" fill="#c050c0"/><path d="M1089.500 556.500L1098 556.200L1098.400 566.500L1088.500 568.200Z" fill="#3a3a3a"/><circle cx="1091" cy="564" r="1" fill="#7030d0"/><path d="M1093 568.500L1098 568L1097 572L1094 572.500Z" fill="#f0a020"/><path d="M1070 578H1096.300V591.500C1098 596 1101 600 1103 604C1101 608.500 1094 611 1087.500 610.500C1086 604 1086 598 1087 591.500H1079C1080 598 1080 604 1078.500 610.500C1072 611 1065 608.500 1063 604C1065 600 1068 596 1070 591.500Z" fill="#2626e4"/><path d="M1073.500 568.500L1078 568L1083 578.500L1088 568L1092.500 568.500L1085.500 583L1084.500 600L1084 623.500H1081.800L1081.300 600L1080.300 583Z" fill="#ff22c4"/></g><g filter="url(#b4)"><path d="M1225.600 491L1245.600 497L1247.200 500L1238.700 511.700L1221.200 504.500Z" fill="#3c7cdc"/><path d="M1226.500 493.500L1244 498.500L1237.500 508.500L1224.500 503.500Z" fill="#5aa0f0"/><ellipse cx="1229.300" cy="500.700" rx="4.600" ry="5.800" transform="rotate(25 1229.300 500.700)" fill="#e88ee0"/><ellipse cx="1236.800" cy="502.200" rx="3.500" ry="6.200" transform="rotate(15 1236.800 502.200)" fill="#f0a020"/><path d="M1233.500 502L1231.300 507" stroke="#30d050" stroke-width="1"/></g><g transform="translate(930.7 626.0) scale(0.990)" filter="url(#bl)"><ellipse cx="0" cy="4.800" rx="2.300" ry="3.600" fill="#c08a50"/><path d="M-2.400 3.600C-2.300 -1 2.300 -1 2.400 3.600Z" fill="#2a6fd8"/><rect x="-1.100" y="7.800" width="2.200" height="2.400" fill="#b07a44"/><path d="M-7.600 16.300L-5.700 17.200L-14.500 30.600L-15.900 29.600ZM7.600 16.300L5.700 17.200L14.500 30.600L15.900 29.600Z" fill="#c48a48"/><path d="M-3 9.600L3 9.600L9 11.800L7.700 17.800L4.600 16.200L4.400 28.400L-4.700 28.400L-4.600 16.200L-7.700 17.800L-9 11.800Z" fill="#20b0a8"/><path d="M-4.700 28L4.400 28L6.600 51.600L3.600 51.600L.3 33L-.3 33L-2.300 51.600L-5.900 51.600Z" fill="#3a60c8"/><path d="M-7.400 51.800h4.200v1.800h-4.200zM4.300 51.800h3.800v1.800h-3.800z" fill="#e4e4e4"/></g><rect x="898" y="684.800" width="370" height="1.200" fill="#808080"/>
</svg>
</div>
<div class="abs" style="left:1266.800px;top:67px;width:1.200px;height:619px;background:#858585"></div><div class="abs" id="dlg" style="left:357.5px;top:141.0px;width:553.5px;height:405.0px;background:#fff;overflow:hidden">
<div class="abs" style="left:0;top:0;width:553.5px;height:25.5px;background:linear-gradient(#4890c5,#3d80ba 60%,#3a79b4);border-bottom:1px solid #2e6aa3"></div>
<div class="logo" style="left:3.500px;top:2.500px;width:21px;height:21px"></div>
<div class="abs" style="left:3.500px;top:9.800px;width:21px;text-align:center;font:bold 7.500px 'Liberation Sans',sans-serif;color:#fff;letter-spacing:-0.2px;line-height:1">Y<span style="color:#e33">i</span>N<span style="color:#e33">O</span></div>
<div class="abs" style="left:30.500px;top:8px"><span class="cj" style="width:46.50px;color:#fff;">加入样本库</span></div>
<div class="wbtn" style="left:501.0px;width:21px;border-radius:0 0 0 3px"></div><div class="wbtn" style="left:521.0px;width:26.5px;border-radius:0 0 3px 0"></div>
<div class="abs" style="left:507.5px;top:8px;width:8px;height:1.5px;background:#fff"></div>
<svg class="abs" style="left:532.0px;top:2.500px" width="8" height="8" viewBox="0 0 8 8"><path d="M0.500 0.500L7.500 7.500M7.500 0.500L0.500 7.500" stroke="#fff" stroke-width="1" fill="none"/></svg>
<div class="abs" style="left:0;top:31.1px;width:553.5px;height:330.1px;overflow:hidden">
<div class="abs" style="left:6.0px;top:-5.89px;width:519.0px;height:19.29px;background:#fff;border-top:1px solid #8a8a8a"></div>
<div class="abs" style="left:28.5px;top:-0.09px;width:8px;height:8px;border:1px solid #9a9a9a;border-radius:1.500px;background:linear-gradient(#f4f4f4,#dcdcdc)"></div>
<div class="abs" style="left:59.7px;top:-3.89px;font-size:8.900px;line-height:19.19px;color:#454545;white-space:pre">PTV2</div>
<div class="abs" style="left:346.5px;top:-3.39px;width:101px;height:16.300px;border:1px solid #5a5a5a;background:#fff;font-size:8.600px;line-height:15.300px;padding-left:2.500px;color:#111;white-space:pre">PTV</div>
<svg class="abs" style="left:438.0px;top:2.11px" width="5" height="4" viewBox="0 0 5 4"><path d="M0 0h5L2.500 4z" fill="#222"/></svg>
<div class="abs" style="left:6.0px;top:13.30px;width:519.0px;height:19.29px;background:#eef6ff;border-top:1px solid #8a8a8a"></div>
<div class="abs" style="left:28.5px;top:19.10px;width:8px;height:8px;border:1px solid #9a9a9a;border-radius:1.500px;background:linear-gradient(#f4f4f4,#dcdcdc)"></div>
<svg class="abs" style="left:28.8px;top:18.60px" width="8" height="8" viewBox="0 0 8 8"><path d="M1.300 4.200L3.200 6.200L7 1" stroke="#111" stroke-width="1.500" fill="none"/></svg>
<div class="abs" style="left:59.7px;top:15.30px;font-size:8.900px;line-height:19.19px;color:#454545;white-space:pre">Brain stem-PRV</div>
<div class="abs" style="left:346.5px;top:15.80px;width:101px;height:16.300px;border:1px solid #5a5a5a;background:#fff;font-size:8.600px;line-height:15.300px;padding-left:2.500px;color:#111;white-space:pre">Brain_Stem</div>
<svg class="abs" style="left:438.0px;top:21.30px" width="5" height="4" viewBox="0 0 5 4"><path d="M0 0h5L2.500 4z" fill="#222"/></svg>
<div class="abs" style="left:6.0px;top:32.49px;width:519.0px;height:19.29px;background:#fff;border-top:1px solid #8a8a8a"></div>
<div class="abs" style="left:28.5px;top:38.29px;width:8px;height:8px;border:1px solid #9a9a9a;border-radius:1.500px;background:linear-gradient(#f4f4f4,#dcdcdc)"></div>
<svg class="abs" style="left:28.8px;top:37.79px" width="8" height="8" viewBox="0 0 8 8"><path d="M1.300 4.200L3.200 6.200L7 1" stroke="#111" stroke-width="1.500" fill="none"/></svg>
<div class="abs" style="left:59.7px;top:34.49px;font-size:8.900px;line-height:19.19px;color:#454545;white-space:pre">Spinal cord</div>
<div class="abs" style="left:346.5px;top:34.99px;width:101px;height:16.300px;border:1px solid #5a5a5a;background:#fff;font-size:8.600px;line-height:15.300px;padding-left:2.500px;color:#111;white-space:pre">Spinal_Cord</div>
<svg class="abs" style="left:438.0px;top:40.49px" width="5" height="4" viewBox="0 0 5 4"><path d="M0 0h5L2.500 4z" fill="#222"/></svg>
<div class="abs" style="left:6.0px;top:51.68px;width:519.0px;height:19.29px;background:#eef6ff;border-top:1px solid #8a8a8a"></div>
<div class="abs" style="left:28.5px;top:57.48px;width:8px;height:8px;border:1px solid #9a9a9a;border-radius:1.500px;background:linear-gradient(#f4f4f4,#dcdcdc)"></div>
<svg class="abs" style="left:28.8px;top:56.98px" width="8" height="8" viewBox="0 0 8 8"><path d="M1.300 4.200L3.200 6.200L7 1" stroke="#111" stroke-width="1.500" fill="none"/></svg>
<div class="abs" style="left:59.7px;top:53.68px;font-size:8.900px;line-height:19.19px;color:#454545;white-space:pre">Len-L</div>
<div class="abs" style="left:346.5px;top:54.18px;width:101px;height:16.300px;border:1px solid #5a5a5a;background:#fff;font-size:8.600px;line-height:15.300px;padding-left:2.500px;color:#111;white-space:pre">Lens_L</div>
<svg class="abs" style="left:438.0px;top:59.68px" width="5" height="4" viewBox="0 0 5 4"><path d="M0 0h5L2.500 4z" fill="#222"/></svg>
<div class="abs" style="left:6.0px;top:70.87px;width:519.0px;height:19.29px;background:#fff;border-top:1px solid #8a8a8a"></div>
<div class="abs" style="left:28.5px;top:76.67px;width:8px;height:8px;border:1px solid #9a9a9a;border-radius:1.500px;background:linear-gradient(#f4f4f4,#dcdcdc)"></div>
<svg class="abs" style="left:28.8px;top:76.17px" width="8" height="8" viewBox="0 0 8 8"><path d="M1.300 4.200L3.200 6.200L7 1" stroke="#111" stroke-width="1.500" fill="none"/></svg>
<div class="abs" style="left:59.7px;top:72.87px;font-size:8.900px;line-height:19.19px;color:#454545;white-space:pre">Len-R</div>
<div class="abs" style="left:346.5px;top:73.37px;width:101px;height:16.300px;border:1px solid #5a5a5a;background:#fff;font-size:8.600px;line-height:15.300px;padding-left:2.500px;color:#111;white-space:pre">Lens_R</div>
<svg class="abs" style="left:438.0px;top:78.87px" width="5" height="4" viewBox="0 0 5 4"><path d="M0 0h5L2.500 4z" fill="#222"/></svg>
<div class="abs" style="left:6.0px;top:90.06px;width:519.0px;height:19.29px;background:#eef6ff;border-top:1px solid #8a8a8a"></div>
<div class="abs" style="left:28.5px;top:95.86px;width:8px;height:8px;border:1px solid #9a9a9a;border-radius:1.500px;background:linear-gradient(#f4f4f4,#dcdcdc)"></div>
<svg class="abs" style="left:28.8px;top:95.36px" width="8" height="8" viewBox="0 0 8 8"><path d="M1.300 4.200L3.200 6.200L7 1" stroke="#111" stroke-width="1.500" fill="none"/></svg>
<div class="abs" style="left:59.7px;top:92.06px;font-size:8.900px;line-height:19.19px;color:#454545;white-space:pre">Eyeball-L</div>
<div class="abs" style="left:346.5px;top:92.56px;width:101px;height:16.300px;border:1px solid #5a5a5a;background:#fff;font-size:8.600px;line-height:15.300px;padding-left:2.500px;color:#111;white-space:pre">Eye_L</div>
<svg class="abs" style="left:438.0px;top:98.06px" width="5" height="4" viewBox="0 0 5 4"><path d="M0 0h5L2.500 4z" fill="#222"/></svg>
<div class="abs" style="left:6.0px;top:109.25px;width:519.0px;height:19.29px;background:#fff;border-top:1px solid #8a8a8a"></div>
<div class="abs" style="left:28.5px;top:115.05px;width:8px;height:8px;border:1px solid #9a9a9a;border-radius:1.500px;background:linear-gradient(#f4f4f4,#dcdcdc)"></div>
<svg class="abs" style="left:28.8px;top:114.55px" width="8" height="8" viewBox="0 0 8 8"><path d="M1.300 4.200L3.200 6.200L7 1" stroke="#111" stroke-width="1.500" fill="none"/></svg>
<div class="abs" style="left:59.7px;top:111.25px;font-size:8.900px;line-height:19.19px;color:#454545;white-space:pre">Eyeball-R</div>
<div class="abs" style="left:346.5px;top:111.75px;width:101px;height:16.300px;border:1px solid #5a5a5a;background:#fff;font-size:8.600px;line-height:15.300px;padding-left:2.500px;color:#111;white-space:pre">Eye_R</div>
<svg class="abs" style="left:438.0px;top:117.25px" width="5" height="4" viewBox="0 0 5 4"><path d="M0 0h5L2.500 4z" fill="#222"/></svg>
<div class="abs" style="left:6.0px;top:128.44px;width:519.0px;height:19.29px;background:#eef6ff;border-top:1px solid #8a8a8a"></div>
<div class="abs" style="left:28.5px;top:134.24px;width:8px;height:8px;border:1px solid #9a9a9a;border-radius:1.500px;background:linear-gradient(#f4f4f4,#dcdcdc)"></div>
<svg class="abs" style="left:28.8px;top:133.74px" width="8" height="8" viewBox="0 0 8 8"><path d="M1.300 4.200L3.200 6.200L7 1" stroke="#111" stroke-width="1.500" fill="none"/></svg>
<div class="abs" style="left:59.7px;top:130.44px;font-size:8.900px;line-height:19.19px;color:#454545;white-space:pre">Optic nerve-L</div>
<div class="abs" style="left:346.5px;top:130.94px;width:101px;height:16.300px;border:1px solid #5a5a5a;background:#fff;font-size:8.600px;line-height:15.300px;padding-left:2.500px;color:#111;white-space:pre">Opt_Nerve_L</div>
<svg class="abs" style="left:438.0px;top:136.44px" width="5" height="4" viewBox="0 0 5 4"><path d="M0 0h5L2.500 4z" fill="#222"/></svg>
<div class="abs" style="left:6.0px;top:147.63px;width:519.0px;height:19.29px;background:#fff;border-top:1px solid #8a8a8a"></div>
<div class="abs" style="left:28.5px;top:153.43px;width:8px;height:8px;border:1px solid #9a9a9a;border-radius:1.500px;background:linear-gradient(#f4f4f4,#dcdcdc)"></div>
<svg class="abs" style="left:28.8px;top:152.93px" width="8" height="8" viewBox="0 0 8 8"><path d="M1.300 4.200L3.200 6.200L7 1" stroke="#111" stroke-width="1.500" fill="none"/></svg>
<div class="abs" style="left:59.7px;top:149.63px;font-size:8.900px;line-height:19.19px;color:#454545;white-space:pre">Optic nerve-R</div>
<div class="abs" style="left:346.5px;top:150.13px;width:101px;height:16.300px;border:1px solid #5a5a5a;background:#fff;font-size:8.600px;line-height:15.300px;padding-left:2.500px;color:#111;white-space:pre">Opt_Nerve_R</div>
<svg class="abs" style="left:438.0px;top:155.63px" width="5" height="4" viewBox="0 0 5 4"><path d="M0 0h5L2.500 4z" fill="#222"/></svg>
<div class="abs" style="left:6.0px;top:166.82px;width:519.0px;height:19.29px;background:#eef6ff;border-top:1px solid #8a8a8a"></div>
<div class="abs" style="left:28.5px;top:172.62px;width:8px;height:8px;border:1px solid #9a9a9a;border-radius:1.500px;background:linear-gradient(#f4f4f4,#dcdcdc)"></div>
<svg class="abs" style="left:28.8px;top:172.12px" width="8" height="8" viewBox="0 0 8 8"><path d="M1.300 4.200L3.200 6.200L7 1" stroke="#111" stroke-width="1.500" fill="none"/></svg>
<div class="abs" style="left:59.7px;top:168.82px;font-size:8.900px;line-height:19.19px;color:#454545;white-space:pre">Optic chiasm</div>
<div class="abs" style="left:346.5px;top:169.32px;width:101px;height:16.300px;border:1px solid #5a5a5a;background:#fff;font-size:8.600px;line-height:15.300px;padding-left:2.500px;color:#111;white-space:pre">Opt_Chiasma</div>
<svg class="abs" style="left:438.0px;top:174.82px" width="5" height="4" viewBox="0 0 5 4"><path d="M0 0h5L2.500 4z" fill="#222"/></svg>
<div class="abs" style="left:6.0px;top:186.01px;width:519.0px;height:19.29px;background:#fff;border-top:1px solid #8a8a8a"></div>
<div class="abs" style="left:28.5px;top:191.81px;width:8px;height:8px;border:1px solid #9a9a9a;border-radius:1.500px;background:linear-gradient(#f4f4f4,#dcdcdc)"></div>
<svg class="abs" style="left:28.8px;top:191.31px" width="8" height="8" viewBox="0 0 8 8"><path d="M1.300 4.200L3.200 6.200L7 1" stroke="#111" stroke-width="1.500" fill="none"/></svg>
<div class="abs" style="left:59.7px;top:188.01px;font-size:8.900px;line-height:19.19px;color:#454545;white-space:pre">Parotid-L</div>
<div class="abs" style="left:346.5px;top:188.51px;width:101px;height:16.300px;border:1px solid #5a5a5a;background:#fff;font-size:8.600px;line-height:15.300px;padding-left:2.500px;color:#111;white-space:pre">Parotid_Gland_L</div>
<svg class="abs" style="left:438.0px;top:194.01px" width="5" height="4" viewBox="0 0 5 4"><path d="M0 0h5L2.500 4z" fill="#222"/></svg>
<div class="abs" style="left:6.0px;top:205.20px;width:519.0px;height:19.29px;background:#eef6ff;border-top:1px solid #8a8a8a"></div>
<div class="abs" style="left:28.5px;top:211.00px;width:8px;height:8px;border:1px solid #9a9a9a;border-radius:1.500px;background:linear-gradient(#f4f4f4,#dcdcdc)"></div>
<svg class="abs" style="left:28.8px;top:210.50px" width="8" height="8" viewBox="0 0 8 8"><path d="M1.300 4.200L3.200 6.200L7 1" stroke="#111" stroke-width="1.500" fill="none"/></svg>
<div class="abs" style="left:59.7px;top:207.20px;font-size:8.900px;line-height:19.19px;color:#454545;white-space:pre">Parotid-R</div>
<div class="abs" style="left:346.5px;top:207.70px;width:101px;height:16.300px;border:1px solid #5a5a5a;background:#fff;font-size:8.600px;line-height:15.300px;padding-left:2.500px;color:#111;white-space:pre">Parotid_Gland_R</div>
<svg class="abs" style="left:438.0px;top:213.20px" width="5" height="4" viewBox="0 0 5 4"><path d="M0 0h5L2.500 4z" fill="#222"/></svg>
<div class="abs" style="left:6.0px;top:224.39px;width:519.0px;height:19.29px;background:#fff;border-top:1px solid #8a8a8a"></div>
<div class="abs" style="left:28.5px;top:230.19px;width:8px;height:8px;border:1px solid #9a9a9a;border-radius:1.500px;background:linear-gradient(#f4f4f4,#dcdcdc)"></div>
<svg class="abs" style="left:28.8px;top:229.69px" width="8" height="8" viewBox="0 0 8 8"><path d="M1.300 4.200L3.200 6.200L7 1" stroke="#111" stroke-width="1.500" fill="none"/></svg>
<div class="abs" style="left:59.7px;top:226.39px;font-size:8.900px;line-height:19.19px;color:#454545;white-space:pre">Temporal lobe-L</div>
<div class="abs" style="left:346.5px;top:226.89px;width:101px;height:16.300px;border:1px solid #5a5a5a;background:#fff;font-size:8.600px;line-height:15.300px;padding-left:2.500px;color:#111;white-space:pre">Temporal_Lobes_L</div>
<svg class="abs" style="left:438.0px;top:232.39px" width="5" height="4" viewBox="0 0 5 4"><path d="M0 0h5L2.500 4z" fill="#222"/></svg>
<div class="abs" style="left:6.0px;top:243.58px;width:519.0px;height:19.29px;background:#eef6ff;border-top:1px solid #8a8a8a"></div>
<div class="abs" style="left:28.5px;top:249.38px;width:8px;height:8px;border:1px solid #9a9a9a;border-radius:1.500px;background:linear-gradient(#f4f4f4,#dcdcdc)"></div>
<svg class="abs" style="left:28.8px;top:248.88px" width="8" height="8" viewBox="0 0 8 8"><path d="M1.300 4.200L3.200 6.200L7 1" stroke="#111" stroke-width="1.500" fill="none"/></svg>
<div class="abs" style="left:59.7px;top:245.58px;font-size:8.900px;line-height:19.19px;color:#454545;white-space:pre">Temporal lobe-R</div>
<div class="abs" style="left:346.5px;top:246.08px;width:101px;height:16.300px;border:1px solid #5a5a5a;background:#fff;font-size:8.600px;line-height:15.300px;padding-left:2.500px;color:#111;white-space:pre">Temporal_Lobes_R</div>
<svg class="abs" style="left:438.0px;top:251.58px" width="5" height="4" viewBox="0 0 5 4"><path d="M0 0h5L2.500 4z" fill="#222"/></svg>
<div class="abs" style="left:6.0px;top:262.77px;width:519.0px;height:19.29px;background:#fff;border-top:1px solid #8a8a8a"></div>
<div class="abs" style="left:28.5px;top:268.57px;width:8px;height:8px;border:1px solid #9a9a9a;border-radius:1.500px;background:linear-gradient(#f4f4f4,#dcdcdc)"></div>
<svg class="abs" style="left:28.8px;top:268.07px" width="8" height="8" viewBox="0 0 8 8"><path d="M1.300 4.200L3.200 6.200L7 1" stroke="#111" stroke-width="1.500" fill="none"/></svg>
<div class="abs" style="left:59.7px;top:264.77px;font-size:8.900px;line-height:19.19px;color:#454545;white-space:pre">TMjoint-L</div>
<div class="abs" style="left:346.5px;top:265.27px;width:101px;height:16.300px;border:1px solid #5a5a5a;background:#fff;font-size:8.600px;line-height:15.300px;padding-left:2.500px;color:#111;white-space:pre">T_M_Joint_L</div>
<svg class="abs" style="left:438.0px;top:270.77px" width="5" height="4" viewBox="0 0 5 4"><path d="M0 0h5L2.500 4z" fill="#222"/></svg>
<div class="abs" style="left:6.0px;top:281.96px;width:519.0px;height:19.29px;background:#eef6ff;border-top:1px solid #8a8a8a"></div>
<div class="abs" style="left:28.5px;top:287.76px;width:8px;height:8px;border:1px solid #9a9a9a;border-radius:1.500px;background:linear-gradient(#f4f4f4,#dcdcdc)"></div>
<svg class="abs" style="left:28.8px;top:287.26px" width="8" height="8" viewBox="0 0 8 8"><path d="M1.300 4.200L3.200 6.200L7 1" stroke="#111" stroke-width="1.500" fill="none"/></svg>
<div class="abs" style="left:59.7px;top:283.96px;font-size:8.900px;line-height:19.19px;color:#454545;white-space:pre">TMjoint-R</div>
<div class="abs" style="left:346.5px;top:284.46px;width:101px;height:16.300px;border:1px solid #5a5a5a;background:#fff;font-size:8.600px;line-height:15.300px;padding-left:2.500px;color:#111;white-space:pre">T_M_Joint_R</div>
<svg class="abs" style="left:438.0px;top:289.96px" width="5" height="4" viewBox="0 0 5 4"><path d="M0 0h5L2.500 4z" fill="#222"/></svg>
<div class="abs" style="left:6.0px;top:301.15px;width:519.0px;height:19.29px;background:#fff;border-top:1px solid #8a8a8a"></div>
<div class="abs" style="left:28.5px;top:306.95px;width:8px;height:8px;border:1px solid #9a9a9a;border-radius:1.500px;background:linear-gradient(#f4f4f4,#dcdcdc)"></div>
<div class="abs" style="left:59.7px;top:303.15px;font-size:8.900px;line-height:19.19px;color:#454545;white-space:pre">Cochlea-L</div>
<div class="abs" style="left:346.5px;top:303.65px;width:101px;height:16.300px;border:1px solid #5a5a5a;background:#fff;font-size:8.600px;line-height:15.300px;padding-left:2.500px;color:#111;white-space:pre"></div>
<svg class="abs" style="left:438.0px;top:309.15px" width="5" height="4" viewBox="0 0 5 4"><path d="M0 0h5L2.500 4z" fill="#222"/></svg>
<div class="abs" style="left:6.0px;top:320.34px;width:519.0px;height:19.29px;background:#eef6ff;border-top:1px solid #8a8a8a"></div>
<div class="abs" style="left:28.5px;top:326.14px;width:8px;height:8px;border:1px solid #9a9a9a;border-radius:1.500px;background:linear-gradient(#f4f4f4,#dcdcdc)"></div>
<div class="abs" style="left:59.7px;top:322.34px;font-size:8.900px;line-height:19.19px;color:#454545;white-space:pre">Cochlea-R</div>
<div class="abs" style="left:346.5px;top:322.84px;width:101px;height:16.300px;border:1px solid #5a5a5a;background:#fff;font-size:8.600px;line-height:15.300px;padding-left:2.500px;color:#111;white-space:pre"></div>
<svg class="abs" style="left:438.0px;top:328.34px" width="5" height="4" viewBox="0 0 5 4"><path d="M0 0h5L2.500 4z" fill="#222"/></svg>
</div>
<div class="abs" style="left:5.7px;top:31.1px;width:0.900px;height:330.1px;background:#707070"></div>
<div class="abs" style="left:58.0px;top:31.1px;width:0.900px;height:330.1px;background:#707070"></div>
<div class="abs" style="left:268.7px;top:31.1px;width:0.900px;height:330.1px;background:#707070"></div>
<div class="abs" style="left:524.7px;top:31.1px;width:0.900px;height:330.1px;background:#707070"></div>
<div class="abs" style="left:536.5px;top:31.1px;width:11px;height:330.1px;background:#f1f1f1"></div>
<div class="abs" style="left:538.7px;top:96.0px;width:8px;height:90px;background:#c1c1c1"></div>
<svg class="abs" style="left:539.5px;top:36.0px" width="5" height="3" viewBox="0 0 5 3"><path d="M0 3L2.500 0L5 3z" fill="#505050"/></svg>
<svg class="abs" style="left:539.5px;top:353.5px" width="5" height="3" viewBox="0 0 5 3"><path d="M0 0L2.500 3L5 0z" fill="#505050"/></svg>
<div class="abs" style="left:455.8px;top:374.7px;width:36.500px;height:19.700px;border:1px solid #bdbdbd;border-radius:2px;background:linear-gradient(#fafafa,#e2e2e2);text-align:center;padding-top:4.200px"><span class="cj" style="width:18.60px;color:#222;">确定</span></div>
<div class="abs" style="left:497.7px;top:374.7px;width:36.500px;height:19.700px;border:1px solid #bdbdbd;border-radius:2px;background:linear-gradient(#fafafa,#e2e2e2);text-align:center;padding-top:4.200px"><span class="cj" style="width:18.60px;color:#222;">取消</span></div>
</div>
</body></html>
